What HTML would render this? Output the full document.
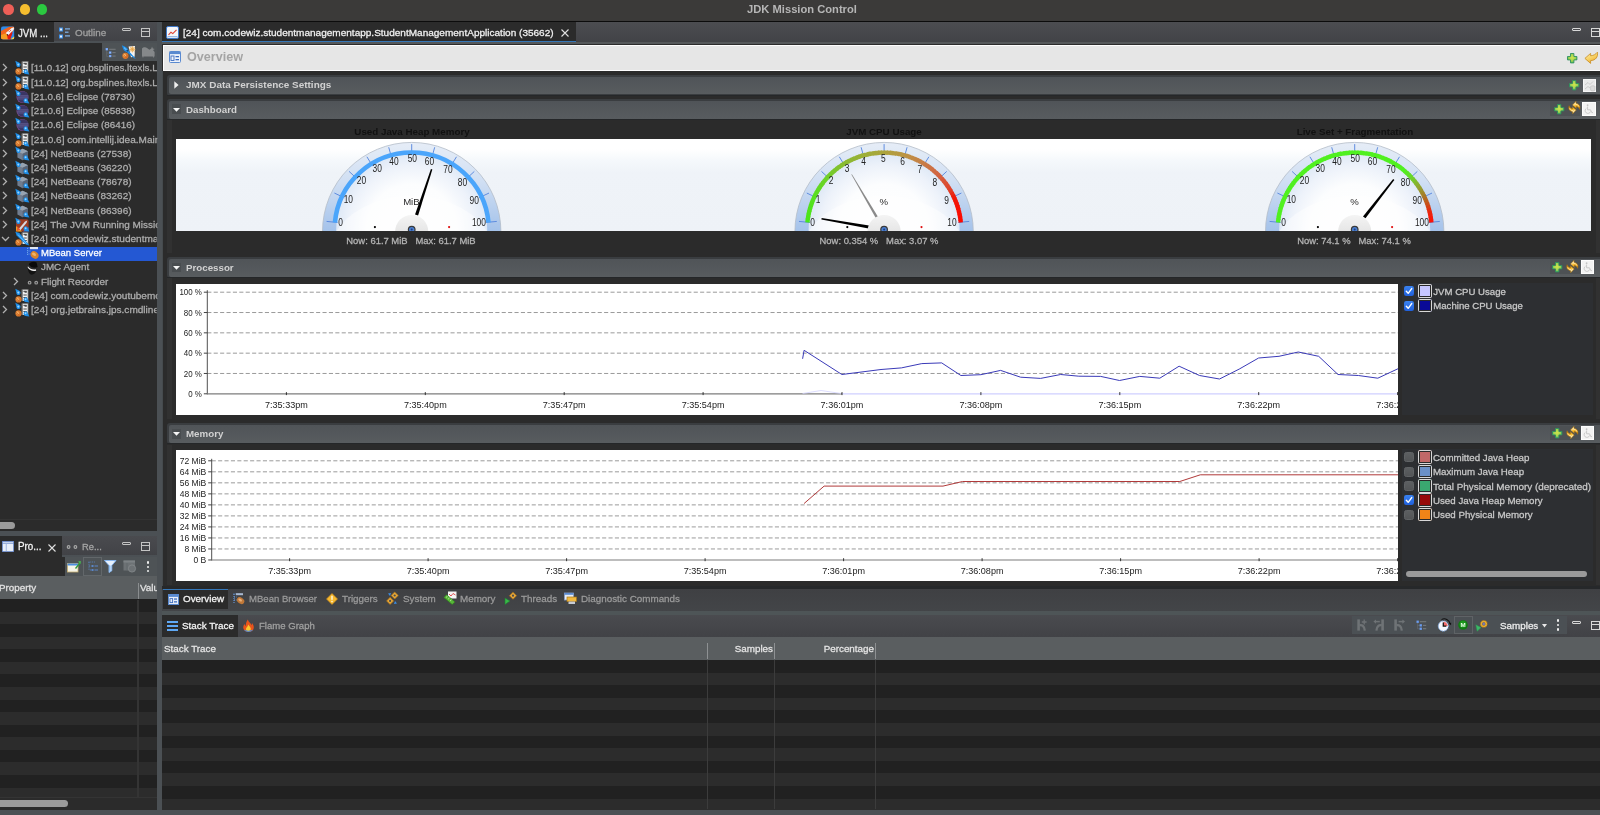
<!DOCTYPE html>
<html><head><meta charset="utf-8"><title>JDK Mission Control</title>
<style>
*{box-sizing:border-box;margin:0;padding:0}
html,body{width:1600px;height:815px;overflow:hidden;background:#2b2b2b}
body{font-family:"Liberation Sans",sans-serif;font-size:11px;color:#bbb;position:relative}
.a{position:absolute}
.t{position:absolute;white-space:nowrap;line-height:14px}
svg{position:absolute;overflow:visible}
</style></head><body>
<div class="a" style="left:0;top:0;width:1600px;height:815px;will-change:transform">

<div class="a" style="left:0px;top:0px;width:1600px;height:22px;background:#3b3a39;"></div>
<div class="a" style="left:0px;top:20.9px;width:1600px;height:1.2px;background:#0c0c0c;"></div>
<div class="a" style="left:3.000000000000001px;top:4.1000000000000005px;width:10.6px;height:10.6px;border-radius:50%;background:#ee5f57"></div>
<div class="a" style="left:19.7px;top:4.1000000000000005px;width:10.6px;height:10.6px;border-radius:50%;background:#f6be2f"></div>
<div class="a" style="left:36.7px;top:4.1000000000000005px;width:10.6px;height:10.6px;border-radius:50%;background:#2bc840"></div>
<div class="t" style="left:601.7px;top:1.8px;width:400px;text-align:center;transform-origin:50% 50%;transform:scaleX(1.015);color:#b6b6b6;font-size:11px;font-weight:bold;">JDK Mission Control</div>
<div class="a" style="left:157px;top:22px;width:5px;height:793px;background:#4b5054;"></div>
<div class="a" style="left:0px;top:22px;width:157px;height:19.6px;background:linear-gradient(#4a4b4f,#414246);"></div>
<div class="a" style="left:0px;top:41.4px;width:157px;height:1.6px;background:#4b5054;"></div>
<div class="a" style="left:0px;top:22px;width:54px;height:19.6px;background:#2b2b2b;"></div>
<svg style="left:0.9px;top:25.7px" width="13.4" height="13.8" viewBox="0 0 13 13"><defs><clipPath id="jmcc"><rect x="0" y="0" width="13" height="13" rx="2.2"/></clipPath></defs><g clip-path="url(#jmcc)"><rect width="13" height="13" fill="#2f8ae8"/><path d="M0 4.6 L7.6 0.8 L13 0 L13 2.4 L9.4 8.6 L9.2 13 L0 13 Z" fill="#f2641c"/><path d="M6.2 6 L9.4 4 L11.2 6.6 L9 13 L6.4 13 Z" fill="#e21c10"/><path d="M0 8.6 L5 6.8 L6.6 13 L0 13 Z" fill="#f89c20"/><path d="M9.2 13 L13 9.8 L13 13 Z" fill="#f8d444"/><path d="M4.6 6.6 L10.4 1.8 L12.8 1 L12.2 3.6 L7 8.8 Z" fill="#f4f4f8"/><path d="M7.4 4.4 L8.6 5.8 M8.6 3.4 L9.8 4.8" stroke="#e02010" stroke-width="0.7"/><path d="M6.3 7.5 L7.3 8.5 L6.5 9.3 L5.6 8.3 Z" fill="#1c1c1c"/></g></svg>
<div class="t" style="left:18px;top:25.5px;transform-origin:0 50%;transform:scaleX(0.91);color:#f0f0f0;font-size:10.6px;-webkit-text-stroke:0.28px;">JVM ...</div>
<svg style="left:59px;top:27px" width="12" height="12" viewBox="0 0 12 12"><rect x="0" y="0.5" width="4" height="4" fill="#3d8fe6"/><rect x="1" y="1.5" width="2" height="2" fill="#eaf2fc"/><rect x="0" y="7.5" width="4" height="4" fill="#3d8fe6"/><rect x="1" y="8.5" width="2" height="2" fill="#eaf2fc"/><rect x="6" y="1.3" width="5" height="1.2" fill="#7fb6f0"/><rect x="6" y="4.6" width="3.5" height="1.2" fill="#7fb6f0"/><rect x="6" y="8.3" width="5" height="1.2" fill="#7fb6f0"/></svg>
<div class="t" style="left:75px;top:26px;transform-origin:0 50%;transform:scaleX(0.9994);color:#a0a0a0;font-size:9.85px;-webkit-text-stroke:0.28px;">Outline</div>
<div class="a" style="left:122px;top:28px;width:9px;height:3px;border:1px solid #c4c4c4;border-radius:1px"></div>
<div class="a" style="left:141px;top:28px;width:9px;height:9px;border:1px solid #c4c4c4;border-top-width:1px"></div><div class="a" style="left:141px;top:30.5px;width:9px;height:1px;background:#c4c4c4"></div>
<div class="a" style="left:0px;top:43px;width:157px;height:18px;background:#2b2b2b;"></div>
<div class="a" style="left:101.8px;top:42.6px;width:55.2px;height:18.5px;background:#4e5356;"></div>
<svg style="left:105px;top:47px" width="12" height="11" viewBox="0 0 12 11"><path d="M1.6 3 V9.4 H4 M1.6 6 H4" stroke="#6a6e72" stroke-width="0.6" fill="none"/><rect x="0.6" y="1" width="2.4" height="2.4" fill="#6a9cf0"/><rect x="4" y="4.4" width="2.4" height="2.4" fill="#6a9cf0"/><rect x="4" y="8" width="2.4" height="2.2" fill="#6a9cf0"/><rect x="1.3" y="1.7" width="1" height="1" fill="#a8c8fa"/><rect x="4.7" y="5.1" width="1" height="1" fill="#a8c8fa"/><rect x="4.7" y="8.6" width="1" height="1" fill="#a8c8fa"/><rect x="4.2" y="1.8" width="6.4" height="0.9" fill="#7c8084"/><rect x="7.4" y="5.2" width="3.2" height="0.9" fill="#7c8084"/><rect x="7.4" y="8.6" width="3.2" height="0.9" fill="#7c8084"/></svg>
<svg style="left:121px;top:45px" width="15" height="15" viewBox="0 0 15 15"><path d="M7.6 1.4 L14 1 L13.6 11.8 L10 12.2 Z" fill="#f4f4f4"/><circle cx="11.4" cy="4.3" r="2.5" fill="#f6dcae"/><path d="M11.4 1.2 V7.4 M8.3 4.3 H14.5 M9.3 2.2 L13.5 6.4 M13.5 2.2 L9.3 6.4" stroke="#e8a040" stroke-width="0.7"/><circle cx="4.4" cy="10.8" r="3.1" fill="#d8782a"/><circle cx="3.8" cy="10.1" r="1.7" fill="#f4c070" opacity="0.9"/><path d="M2.4 9.4 L5.6 13 M4 8.4 L7 11.6" stroke="#c84818" stroke-width="0.6"/><path d="M0.8 0.2 L4.2 1.8 C6.4 3 7.2 4.6 7.4 5.8 L14.8 13.8 L13 13.2 L5.8 7 C4 6.6 2.6 5.2 2 3.4 Z" fill="#1d8ee8"/><path d="M3 2.6 L6.4 5.8" stroke="#9ad6ff" stroke-width="0.9"/><path d="M5.6 5 L7 6.4" stroke="#0a3a70" stroke-width="1.2"/></svg>
<svg style="left:141px;top:46px" width="15" height="12" viewBox="0 0 15 12"><path d="M1 2.6 C2 0.8 5 0.8 6 2 L8.4 3.8 L10.4 2.6 L11 0.4 L11.8 2.4 L13.8 3 L12 4 L13.6 6 V10.6 H12.8 V11.6 H12 V10.6 H2.4 V11.6 H1.6 V10.6 H1 Z" fill="#85888a"/></svg>
<div class="a" style="left:0px;top:61px;width:157px;height:470px;background:#2b2b2b;"></div>
<svg style="left:3.3px;top:64.4px" width="5" height="8"><path d="M0 0 L3.5 3.5 L0 7" fill="none" stroke="#b0b0b0" stroke-width="1.3"/></svg>
<svg style="left:14.5px;top:61.4px" width="15" height="14" viewBox="0 0 15 14"><rect x="6.7" y="0.6" width="6.9" height="11.3" fill="#f2f2f2"/><rect x="6.7" y="0.6" width="0.8" height="11.3" fill="#1a1a1a"/><rect x="12.8" y="0.6" width="0.8" height="11.3" fill="#1a1a1a"/><rect x="8.4" y="1.8" width="3.4" height="0.9" fill="#222"/><rect x="9.6" y="2.7" width="2.2" height="0.9" fill="#222"/><rect x="8.4" y="5.6" width="3.4" height="0.8" fill="#222"/><rect x="8.4" y="8.0" width="3.4" height="0.8" fill="#222"/><circle cx="3.5" cy="10.4" r="3.1" fill="#d8782a"/><circle cx="2.9" cy="9.7" r="1.7" fill="#f2b060" opacity="0.9"/><path d="M1.2 9.2 L4.4 12.6 M2.6 7.8 L5.8 11.2" stroke="#c8501a" stroke-width="0.6"/><path d="M0.3 -0.2 L3.4 1.2 C5.6 1.6 6.2 4 4.9 5.4 C3.4 6.9 1.2 5.8 1.3 3.4 Z" fill="#1d8ee8"/><circle cx="3.3" cy="3.6" r="1.05" fill="#9ad6ff"/><path d="M14.4 13.4 L10.6 13 C8.6 12.6 7.9 10.4 9.2 9 C10.6 7.6 12.6 8.4 12.8 10.4 Z" fill="#1d8ee8"/><circle cx="10.6" cy="10.2" r="0.95" fill="#9ad6ff"/></svg>
<div class="t" style="left:31px;top:61.4px;width:126.1px;overflow:hidden;transform-origin:0 50%;transform:scaleX(0.9994);color:#adadad;font-size:9.85px;-webkit-text-stroke:0.28px;">[11.0.12] org.bsplines.ltexls.LtexLanguageServerLauncher</div>
<svg style="left:3.3px;top:78.62px" width="5" height="8"><path d="M0 0 L3.5 3.5 L0 7" fill="none" stroke="#b0b0b0" stroke-width="1.3"/></svg>
<svg style="left:14.5px;top:75.62px" width="15" height="14" viewBox="0 0 15 14"><rect x="6.7" y="0.6" width="6.9" height="11.3" fill="#f2f2f2"/><rect x="6.7" y="0.6" width="0.8" height="11.3" fill="#1a1a1a"/><rect x="12.8" y="0.6" width="0.8" height="11.3" fill="#1a1a1a"/><rect x="8.4" y="1.8" width="3.4" height="0.9" fill="#222"/><rect x="9.6" y="2.7" width="2.2" height="0.9" fill="#222"/><rect x="8.4" y="5.6" width="3.4" height="0.8" fill="#222"/><rect x="8.4" y="8.0" width="3.4" height="0.8" fill="#222"/><circle cx="3.5" cy="10.4" r="3.1" fill="#d8782a"/><circle cx="2.9" cy="9.7" r="1.7" fill="#f2b060" opacity="0.9"/><path d="M1.2 9.2 L4.4 12.6 M2.6 7.8 L5.8 11.2" stroke="#c8501a" stroke-width="0.6"/><path d="M0.3 -0.2 L3.4 1.2 C5.6 1.6 6.2 4 4.9 5.4 C3.4 6.9 1.2 5.8 1.3 3.4 Z" fill="#1d8ee8"/><circle cx="3.3" cy="3.6" r="1.05" fill="#9ad6ff"/><path d="M14.4 13.4 L10.6 13 C8.6 12.6 7.9 10.4 9.2 9 C10.6 7.6 12.6 8.4 12.8 10.4 Z" fill="#1d8ee8"/><circle cx="10.6" cy="10.2" r="0.95" fill="#9ad6ff"/></svg>
<div class="t" style="left:31px;top:75.62px;width:126.1px;overflow:hidden;transform-origin:0 50%;transform:scaleX(0.9994);color:#adadad;font-size:9.85px;-webkit-text-stroke:0.28px;">[11.0.12] org.bsplines.ltexls.LtexLanguageServerLauncher</div>
<svg style="left:3.3px;top:92.84px" width="5" height="8"><path d="M0 0 L3.5 3.5 L0 7" fill="none" stroke="#b0b0b0" stroke-width="1.3"/></svg>
<svg style="left:14.5px;top:89.84px" width="15" height="14" viewBox="0 0 15 14"><circle cx="7.5" cy="7.0" r="6.0" fill="#8a4a98"/><circle cx="7.9" cy="7.0" r="5.8" fill="#3b3664"/><rect x="2.6" y="5.5" width="10.6" height="0.9" fill="#6e6aa2"/><rect x="2.2" y="7.5" width="11" height="0.9" fill="#6e6aa2"/><rect x="2.8" y="9.4" width="9.8" height="0.7" fill="#555188"/><path d="M0.3 -0.2 L3.4 1.2 C5.6 1.6 6.2 4 4.9 5.4 C3.4 6.9 1.2 5.8 1.3 3.4 Z" fill="#1d8ee8"/><circle cx="3.3" cy="3.6" r="1.05" fill="#9ad6ff"/><path d="M14.4 13.4 L10.6 13 C8.6 12.6 7.9 10.4 9.2 9 C10.6 7.6 12.6 8.4 12.8 10.4 Z" fill="#1d8ee8"/><circle cx="10.6" cy="10.2" r="0.95" fill="#9ad6ff"/></svg>
<div class="t" style="left:31px;top:89.84px;width:126.1px;overflow:hidden;transform-origin:0 50%;transform:scaleX(0.9994);color:#adadad;font-size:9.85px;-webkit-text-stroke:0.28px;">[21.0.6] Eclipse (78730)</div>
<svg style="left:3.3px;top:107.06px" width="5" height="8"><path d="M0 0 L3.5 3.5 L0 7" fill="none" stroke="#b0b0b0" stroke-width="1.3"/></svg>
<svg style="left:14.5px;top:104.06px" width="15" height="14" viewBox="0 0 15 14"><circle cx="7.5" cy="7.0" r="6.0" fill="#8a4a98"/><circle cx="7.9" cy="7.0" r="5.8" fill="#3b3664"/><rect x="2.6" y="5.5" width="10.6" height="0.9" fill="#6e6aa2"/><rect x="2.2" y="7.5" width="11" height="0.9" fill="#6e6aa2"/><rect x="2.8" y="9.4" width="9.8" height="0.7" fill="#555188"/><path d="M0.3 -0.2 L3.4 1.2 C5.6 1.6 6.2 4 4.9 5.4 C3.4 6.9 1.2 5.8 1.3 3.4 Z" fill="#1d8ee8"/><circle cx="3.3" cy="3.6" r="1.05" fill="#9ad6ff"/><path d="M14.4 13.4 L10.6 13 C8.6 12.6 7.9 10.4 9.2 9 C10.6 7.6 12.6 8.4 12.8 10.4 Z" fill="#1d8ee8"/><circle cx="10.6" cy="10.2" r="0.95" fill="#9ad6ff"/></svg>
<div class="t" style="left:31px;top:104.06px;width:126.1px;overflow:hidden;transform-origin:0 50%;transform:scaleX(0.9994);color:#adadad;font-size:9.85px;-webkit-text-stroke:0.28px;">[21.0.6] Eclipse (85838)</div>
<svg style="left:3.3px;top:121.28px" width="5" height="8"><path d="M0 0 L3.5 3.5 L0 7" fill="none" stroke="#b0b0b0" stroke-width="1.3"/></svg>
<svg style="left:14.5px;top:118.28px" width="15" height="14" viewBox="0 0 15 14"><circle cx="7.5" cy="7.0" r="6.0" fill="#8a4a98"/><circle cx="7.9" cy="7.0" r="5.8" fill="#3b3664"/><rect x="2.6" y="5.5" width="10.6" height="0.9" fill="#6e6aa2"/><rect x="2.2" y="7.5" width="11" height="0.9" fill="#6e6aa2"/><rect x="2.8" y="9.4" width="9.8" height="0.7" fill="#555188"/><path d="M0.3 -0.2 L3.4 1.2 C5.6 1.6 6.2 4 4.9 5.4 C3.4 6.9 1.2 5.8 1.3 3.4 Z" fill="#1d8ee8"/><circle cx="3.3" cy="3.6" r="1.05" fill="#9ad6ff"/><path d="M14.4 13.4 L10.6 13 C8.6 12.6 7.9 10.4 9.2 9 C10.6 7.6 12.6 8.4 12.8 10.4 Z" fill="#1d8ee8"/><circle cx="10.6" cy="10.2" r="0.95" fill="#9ad6ff"/></svg>
<div class="t" style="left:31px;top:118.28px;width:126.1px;overflow:hidden;transform-origin:0 50%;transform:scaleX(0.9994);color:#adadad;font-size:9.85px;-webkit-text-stroke:0.28px;">[21.0.6] Eclipse (86416)</div>
<svg style="left:3.3px;top:135.50000000000003px" width="5" height="8"><path d="M0 0 L3.5 3.5 L0 7" fill="none" stroke="#b0b0b0" stroke-width="1.3"/></svg>
<svg style="left:14.5px;top:132.50000000000003px" width="15" height="14" viewBox="0 0 15 14"><rect x="6.7" y="0.6" width="6.9" height="11.3" fill="#f2f2f2"/><rect x="6.7" y="0.6" width="0.8" height="11.3" fill="#1a1a1a"/><rect x="12.8" y="0.6" width="0.8" height="11.3" fill="#1a1a1a"/><rect x="8.4" y="1.8" width="3.4" height="0.9" fill="#222"/><rect x="9.6" y="2.7" width="2.2" height="0.9" fill="#222"/><rect x="8.4" y="5.6" width="3.4" height="0.8" fill="#222"/><rect x="8.4" y="8.0" width="3.4" height="0.8" fill="#222"/><circle cx="3.5" cy="10.4" r="3.1" fill="#d8782a"/><circle cx="2.9" cy="9.7" r="1.7" fill="#f2b060" opacity="0.9"/><path d="M1.2 9.2 L4.4 12.6 M2.6 7.8 L5.8 11.2" stroke="#c8501a" stroke-width="0.6"/><path d="M0.3 -0.2 L3.4 1.2 C5.6 1.6 6.2 4 4.9 5.4 C3.4 6.9 1.2 5.8 1.3 3.4 Z" fill="#1d8ee8"/><circle cx="3.3" cy="3.6" r="1.05" fill="#9ad6ff"/><path d="M14.4 13.4 L10.6 13 C8.6 12.6 7.9 10.4 9.2 9 C10.6 7.6 12.6 8.4 12.8 10.4 Z" fill="#1d8ee8"/><circle cx="10.6" cy="10.2" r="0.95" fill="#9ad6ff"/></svg>
<div class="t" style="left:31px;top:132.5px;width:123.7px;overflow:hidden;transform-origin:0 50%;transform:scaleX(1.0184);color:#adadad;font-size:9.85px;-webkit-text-stroke:0.28px;">[21.0.6] com.intellij.idea.Main (1234)</div>
<svg style="left:3.3px;top:149.72000000000003px" width="5" height="8"><path d="M0 0 L3.5 3.5 L0 7" fill="none" stroke="#b0b0b0" stroke-width="1.3"/></svg>
<svg style="left:14.5px;top:146.72000000000003px" width="15" height="14" viewBox="0 0 15 14"><path d="M7.6 1.8 L13 4.2 L13 10.4 L7.6 13.2 L2.4 10.4 L2.4 4.2 Z" fill="#717d8f"/><path d="M7.6 1.8 L13 4.2 L7.6 6.8 L2.4 4.2 Z" fill="#97a3b1"/><path d="M7.6 6.8 L13 4.2 L13 10.4 L7.6 13.2 Z" fill="#586476"/><path d="M0.3 -0.2 L3.4 1.2 C5.6 1.6 6.2 4 4.9 5.4 C3.4 6.9 1.2 5.8 1.3 3.4 Z" fill="#1d8ee8"/><circle cx="3.3" cy="3.6" r="1.05" fill="#9ad6ff"/><path d="M14.4 13.4 L10.6 13 C8.6 12.6 7.9 10.4 9.2 9 C10.6 7.6 12.6 8.4 12.8 10.4 Z" fill="#1d8ee8"/><circle cx="10.6" cy="10.2" r="0.95" fill="#9ad6ff"/></svg>
<div class="t" style="left:31px;top:146.72px;width:124.1px;overflow:hidden;transform-origin:0 50%;transform:scaleX(1.0151);color:#adadad;font-size:9.85px;-webkit-text-stroke:0.28px;">[24] NetBeans (27538)</div>
<svg style="left:3.3px;top:163.94000000000003px" width="5" height="8"><path d="M0 0 L3.5 3.5 L0 7" fill="none" stroke="#b0b0b0" stroke-width="1.3"/></svg>
<svg style="left:14.5px;top:160.94000000000003px" width="15" height="14" viewBox="0 0 15 14"><path d="M7.6 1.8 L13 4.2 L13 10.4 L7.6 13.2 L2.4 10.4 L2.4 4.2 Z" fill="#717d8f"/><path d="M7.6 1.8 L13 4.2 L7.6 6.8 L2.4 4.2 Z" fill="#97a3b1"/><path d="M7.6 6.8 L13 4.2 L13 10.4 L7.6 13.2 Z" fill="#586476"/><path d="M0.3 -0.2 L3.4 1.2 C5.6 1.6 6.2 4 4.9 5.4 C3.4 6.9 1.2 5.8 1.3 3.4 Z" fill="#1d8ee8"/><circle cx="3.3" cy="3.6" r="1.05" fill="#9ad6ff"/><path d="M14.4 13.4 L10.6 13 C8.6 12.6 7.9 10.4 9.2 9 C10.6 7.6 12.6 8.4 12.8 10.4 Z" fill="#1d8ee8"/><circle cx="10.6" cy="10.2" r="0.95" fill="#9ad6ff"/></svg>
<div class="t" style="left:31px;top:160.94px;width:124.1px;overflow:hidden;transform-origin:0 50%;transform:scaleX(1.0151);color:#adadad;font-size:9.85px;-webkit-text-stroke:0.28px;">[24] NetBeans (36220)</div>
<svg style="left:3.3px;top:178.16000000000003px" width="5" height="8"><path d="M0 0 L3.5 3.5 L0 7" fill="none" stroke="#b0b0b0" stroke-width="1.3"/></svg>
<svg style="left:14.5px;top:175.16000000000003px" width="15" height="14" viewBox="0 0 15 14"><path d="M7.6 1.8 L13 4.2 L13 10.4 L7.6 13.2 L2.4 10.4 L2.4 4.2 Z" fill="#717d8f"/><path d="M7.6 1.8 L13 4.2 L7.6 6.8 L2.4 4.2 Z" fill="#97a3b1"/><path d="M7.6 6.8 L13 4.2 L13 10.4 L7.6 13.2 Z" fill="#586476"/><path d="M0.3 -0.2 L3.4 1.2 C5.6 1.6 6.2 4 4.9 5.4 C3.4 6.9 1.2 5.8 1.3 3.4 Z" fill="#1d8ee8"/><circle cx="3.3" cy="3.6" r="1.05" fill="#9ad6ff"/><path d="M14.4 13.4 L10.6 13 C8.6 12.6 7.9 10.4 9.2 9 C10.6 7.6 12.6 8.4 12.8 10.4 Z" fill="#1d8ee8"/><circle cx="10.6" cy="10.2" r="0.95" fill="#9ad6ff"/></svg>
<div class="t" style="left:31px;top:175.16px;width:124.1px;overflow:hidden;transform-origin:0 50%;transform:scaleX(1.0151);color:#adadad;font-size:9.85px;-webkit-text-stroke:0.28px;">[24] NetBeans (78678)</div>
<svg style="left:3.3px;top:192.38000000000002px" width="5" height="8"><path d="M0 0 L3.5 3.5 L0 7" fill="none" stroke="#b0b0b0" stroke-width="1.3"/></svg>
<svg style="left:14.5px;top:189.38000000000002px" width="15" height="14" viewBox="0 0 15 14"><path d="M7.6 1.8 L13 4.2 L13 10.4 L7.6 13.2 L2.4 10.4 L2.4 4.2 Z" fill="#717d8f"/><path d="M7.6 1.8 L13 4.2 L7.6 6.8 L2.4 4.2 Z" fill="#97a3b1"/><path d="M7.6 6.8 L13 4.2 L13 10.4 L7.6 13.2 Z" fill="#586476"/><path d="M0.3 -0.2 L3.4 1.2 C5.6 1.6 6.2 4 4.9 5.4 C3.4 6.9 1.2 5.8 1.3 3.4 Z" fill="#1d8ee8"/><circle cx="3.3" cy="3.6" r="1.05" fill="#9ad6ff"/><path d="M14.4 13.4 L10.6 13 C8.6 12.6 7.9 10.4 9.2 9 C10.6 7.6 12.6 8.4 12.8 10.4 Z" fill="#1d8ee8"/><circle cx="10.6" cy="10.2" r="0.95" fill="#9ad6ff"/></svg>
<div class="t" style="left:31px;top:189.38px;width:124.1px;overflow:hidden;transform-origin:0 50%;transform:scaleX(1.0151);color:#adadad;font-size:9.85px;-webkit-text-stroke:0.28px;">[24] NetBeans (83262)</div>
<svg style="left:3.3px;top:206.60000000000002px" width="5" height="8"><path d="M0 0 L3.5 3.5 L0 7" fill="none" stroke="#b0b0b0" stroke-width="1.3"/></svg>
<svg style="left:14.5px;top:203.60000000000002px" width="15" height="14" viewBox="0 0 15 14"><path d="M7.6 1.8 L13 4.2 L13 10.4 L7.6 13.2 L2.4 10.4 L2.4 4.2 Z" fill="#717d8f"/><path d="M7.6 1.8 L13 4.2 L7.6 6.8 L2.4 4.2 Z" fill="#97a3b1"/><path d="M7.6 6.8 L13 4.2 L13 10.4 L7.6 13.2 Z" fill="#586476"/><path d="M0.3 -0.2 L3.4 1.2 C5.6 1.6 6.2 4 4.9 5.4 C3.4 6.9 1.2 5.8 1.3 3.4 Z" fill="#1d8ee8"/><circle cx="3.3" cy="3.6" r="1.05" fill="#9ad6ff"/><path d="M14.4 13.4 L10.6 13 C8.6 12.6 7.9 10.4 9.2 9 C10.6 7.6 12.6 8.4 12.8 10.4 Z" fill="#1d8ee8"/><circle cx="10.6" cy="10.2" r="0.95" fill="#9ad6ff"/></svg>
<div class="t" style="left:31px;top:203.6px;width:124.1px;overflow:hidden;transform-origin:0 50%;transform:scaleX(1.0151);color:#adadad;font-size:9.85px;-webkit-text-stroke:0.28px;">[24] NetBeans (86396)</div>
<svg style="left:3.3px;top:220.82000000000002px" width="5" height="8"><path d="M0 0 L3.5 3.5 L0 7" fill="none" stroke="#b0b0b0" stroke-width="1.3"/></svg>
<svg style="left:14.5px;top:217.82000000000002px" width="15" height="14" viewBox="0 0 15 14"><rect x="1" y="1.2" width="12.6" height="12.4" rx="2" fill="#9c3c24"/><path d="M1 13.6 L1 8 L7 13.6 Z" fill="#f0a020"/><path d="M13.6 13.6 H8 L13.6 9 Z" fill="#2d6fd0"/><path d="M3.4 11.2 L10 3.4 L12.2 2.4 L11.6 4.8 L5.4 12.2 Z" fill="#d8d8e0"/><path d="M2.4 8.4 L5.4 11.4 L1.6 13.2 Z" fill="#e8552b"/><path d="M0.3 -0.2 L3.4 1.2 C5.6 1.6 6.2 4 4.9 5.4 C3.4 6.9 1.2 5.8 1.3 3.4 Z" fill="#1d8ee8"/><circle cx="3.3" cy="3.6" r="1.05" fill="#9ad6ff"/><path d="M14.4 13.4 L10.6 13 C8.6 12.6 7.9 10.4 9.2 9 C10.6 7.6 12.6 8.4 12.8 10.4 Z" fill="#1d8ee8"/><circle cx="10.6" cy="10.2" r="0.95" fill="#9ad6ff"/></svg>
<div class="t" style="left:31px;top:217.82px;width:124.7px;overflow:hidden;transform-origin:0 50%;transform:scaleX(1.0106);color:#adadad;font-size:9.85px;-webkit-text-stroke:0.28px;">[24] The JVM Running Mission Control</div>
<svg style="left:2.3px;top:236.54000000000002px" width="8" height="5"><path d="M0 0 L3.5 3.5 L7 0" fill="none" stroke="#b0b0b0" stroke-width="1.3"/></svg>
<svg style="left:14.5px;top:232.04000000000002px" width="15" height="14" viewBox="0 0 15 14"><rect x="6.7" y="0.6" width="6.9" height="11.3" fill="#f2f2f2"/><rect x="6.7" y="0.6" width="0.8" height="11.3" fill="#1a1a1a"/><rect x="12.8" y="0.6" width="0.8" height="11.3" fill="#1a1a1a"/><rect x="8.4" y="1.8" width="3.4" height="0.9" fill="#222"/><rect x="9.6" y="2.7" width="2.2" height="0.9" fill="#222"/><rect x="8.4" y="5.6" width="3.4" height="0.8" fill="#222"/><rect x="8.4" y="8.0" width="3.4" height="0.8" fill="#222"/><circle cx="3.5" cy="10.4" r="3.1" fill="#d8782a"/><circle cx="2.9" cy="9.7" r="1.7" fill="#f2b060" opacity="0.9"/><path d="M1.2 9.2 L4.4 12.6 M2.6 7.8 L5.8 11.2" stroke="#c8501a" stroke-width="0.6"/><path d="M0.3 -0.2 L4.4 1 L13.2 11.8 L14.4 13.6 L10.8 12.6 L1.6 3.4 Z" fill="#1d8ee8"/><path d="M3 2.6 L11.6 11.6" stroke="#9ad6ff" stroke-width="0.7"/></svg>
<div class="t" style="left:31px;top:232.04px;width:123.3px;overflow:hidden;transform-origin:0 50%;transform:scaleX(1.0218);color:#adadad;font-size:9.85px;-webkit-text-stroke:0.28px;">[24] com.codewiz.studentmanagementapp.StudentManagementApplication</div>
<div class="a" style="left:0px;top:247px;width:157px;height:14px;background:#2458d3;"></div>
<svg style="left:27px;top:247.16px" width="12" height="13" viewBox="0 0 12 13"><path d="M0.5 1 H7 M0.5 1 V9 M0.5 4 H4 M0.5 7 H4" stroke="#6aa0e8" stroke-width="1" fill="none" stroke-dasharray="1 1"/><rect x="3" y="0" width="8" height="2.2" fill="#dfe6f2"/><ellipse cx="7.6" cy="8" rx="4.2" ry="3.4" transform="rotate(35 7.6 8)" fill="#d9832b"/><ellipse cx="7" cy="7.2" rx="2.2" ry="1.4" transform="rotate(35 7 7.2)" fill="#f0b36a"/></svg>
<div class="t" style="left:41px;top:246.26px;width:119.9px;overflow:hidden;transform-origin:0 50%;transform:scaleX(0.9671);color:#ffffff;font-size:9.85px;-webkit-text-stroke:0.28px;">MBean Server</div>
<svg style="left:27px;top:261.38px" width="12" height="14" viewBox="0 0 12 14"><path d="M1.8 3.4 C2.6 0.8 7.6 -0.2 9.6 1.6 L10.6 6 C7.4 7.6 3.4 6.2 1.8 3.4 Z" fill="#0a0a0a"/><path d="M0.6 6.6 C2.4 10 6.4 11.2 9.2 10 C8 13 5 14.6 3 13 C1.6 11.6 0.8 9 0.6 6.6 Z" fill="#121212"/><path d="M0.9 5.2 C2.8 8 6.2 9 9 8.2 L9.1 9.7 C6 10.8 2.4 9.4 0.7 6.6 Z" fill="#f0f0f0"/></svg>
<div class="t" style="left:41px;top:260.48px;width:116.1px;overflow:hidden;transform-origin:0 50%;transform:scaleX(0.9994);color:#adadad;font-size:9.85px;-webkit-text-stroke:0.28px;">JMC Agent</div>
<svg style="left:14.2px;top:277.70000000000005px" width="5" height="8"><path d="M0 0 L3.5 3.5 L0 7" fill="none" stroke="#b0b0b0" stroke-width="1.3"/></svg>
<svg style="left:27px;top:275.6px" width="12" height="13" viewBox="0 0 12 13"><circle cx="2.6" cy="6.7" r="1.9" fill="#9a9a9a"/><circle cx="9.2" cy="6.7" r="1.9" fill="#9a9a9a"/><circle cx="2.6" cy="6.7" r="0.7" fill="#2b2b2b"/><circle cx="9.2" cy="6.7" r="0.7" fill="#2b2b2b"/></svg>
<div class="t" style="left:41px;top:274.7px;width:116.1px;overflow:hidden;transform-origin:0 50%;transform:scaleX(0.9994);color:#adadad;font-size:9.85px;-webkit-text-stroke:0.28px;">Flight Recorder</div>
<svg style="left:3.3px;top:291.92px" width="5" height="8"><path d="M0 0 L3.5 3.5 L0 7" fill="none" stroke="#b0b0b0" stroke-width="1.3"/></svg>
<svg style="left:14.5px;top:288.92px" width="15" height="14" viewBox="0 0 15 14"><rect x="6.7" y="0.6" width="6.9" height="11.3" fill="#f2f2f2"/><rect x="6.7" y="0.6" width="0.8" height="11.3" fill="#1a1a1a"/><rect x="12.8" y="0.6" width="0.8" height="11.3" fill="#1a1a1a"/><rect x="8.4" y="1.8" width="3.4" height="0.9" fill="#222"/><rect x="9.6" y="2.7" width="2.2" height="0.9" fill="#222"/><rect x="8.4" y="5.6" width="3.4" height="0.8" fill="#222"/><rect x="8.4" y="8.0" width="3.4" height="0.8" fill="#222"/><circle cx="3.5" cy="10.4" r="3.1" fill="#d8782a"/><circle cx="2.9" cy="9.7" r="1.7" fill="#f2b060" opacity="0.9"/><path d="M1.2 9.2 L4.4 12.6 M2.6 7.8 L5.8 11.2" stroke="#c8501a" stroke-width="0.6"/><path d="M0.3 -0.2 L3.4 1.2 C5.6 1.6 6.2 4 4.9 5.4 C3.4 6.9 1.2 5.8 1.3 3.4 Z" fill="#1d8ee8"/><circle cx="3.3" cy="3.6" r="1.05" fill="#9ad6ff"/><path d="M14.4 13.4 L10.6 13 C8.6 12.6 7.9 10.4 9.2 9 C10.6 7.6 12.6 8.4 12.8 10.4 Z" fill="#1d8ee8"/><circle cx="10.6" cy="10.2" r="0.95" fill="#9ad6ff"/></svg>
<div class="t" style="left:31px;top:288.92px;width:123.7px;overflow:hidden;transform-origin:0 50%;transform:scaleX(1.0184);color:#adadad;font-size:9.85px;-webkit-text-stroke:0.28px;">[24] com.codewiz.youtubemcp.YoutubeMcpApplication</div>
<svg style="left:3.3px;top:306.14000000000004px" width="5" height="8"><path d="M0 0 L3.5 3.5 L0 7" fill="none" stroke="#b0b0b0" stroke-width="1.3"/></svg>
<svg style="left:14.5px;top:303.14000000000004px" width="15" height="14" viewBox="0 0 15 14"><rect x="6.7" y="0.6" width="6.9" height="11.3" fill="#f2f2f2"/><rect x="6.7" y="0.6" width="0.8" height="11.3" fill="#1a1a1a"/><rect x="12.8" y="0.6" width="0.8" height="11.3" fill="#1a1a1a"/><rect x="8.4" y="1.8" width="3.4" height="0.9" fill="#222"/><rect x="9.6" y="2.7" width="2.2" height="0.9" fill="#222"/><rect x="8.4" y="5.6" width="3.4" height="0.8" fill="#222"/><rect x="8.4" y="8.0" width="3.4" height="0.8" fill="#222"/><circle cx="3.5" cy="10.4" r="3.1" fill="#d8782a"/><circle cx="2.9" cy="9.7" r="1.7" fill="#f2b060" opacity="0.9"/><path d="M1.2 9.2 L4.4 12.6 M2.6 7.8 L5.8 11.2" stroke="#c8501a" stroke-width="0.6"/><path d="M0.3 -0.2 L3.4 1.2 C5.6 1.6 6.2 4 4.9 5.4 C3.4 6.9 1.2 5.8 1.3 3.4 Z" fill="#1d8ee8"/><circle cx="3.3" cy="3.6" r="1.05" fill="#9ad6ff"/><path d="M14.4 13.4 L10.6 13 C8.6 12.6 7.9 10.4 9.2 9 C10.6 7.6 12.6 8.4 12.8 10.4 Z" fill="#1d8ee8"/><circle cx="10.6" cy="10.2" r="0.95" fill="#9ad6ff"/></svg>
<div class="t" style="left:31px;top:303.14px;width:123.3px;overflow:hidden;transform-origin:0 50%;transform:scaleX(1.0218);color:#adadad;font-size:9.85px;-webkit-text-stroke:0.28px;">[24] org.jetbrains.jps.cmdline.Launcher</div>
<div class="a" style="left:0px;top:519px;width:157px;height:12px;background:#2b2b2b;border-top:1px solid #333"></div>
<div class="a" style="left:0px;top:522px;width:15px;height:7px;background:#9b9b9b;border-radius:0 3.5px 3.5px 0"></div>
<div class="a" style="left:0px;top:531px;width:157px;height:5px;background:#4b5054;"></div>
<div class="a" style="left:0px;top:536px;width:157px;height:19.6px;background:linear-gradient(#4a4b4f,#414246);"></div>
<div class="a" style="left:0px;top:555.4px;width:157px;height:1.6px;background:#4b5054;"></div>
<div class="a" style="left:0px;top:536px;width:62px;height:20.6px;background:#2b2b2b;"></div>
<svg style="left:2px;top:541px" width="12" height="11" viewBox="0 0 12 11"><rect x="0" y="0" width="12" height="11" fill="#5f7fc0"/><rect x="0.8" y="2.8" width="10.4" height="7.4" fill="#e8eef8"/><rect x="3.8" y="2.8" width="0.8" height="7.4" fill="#8fa8d8"/><rect x="0.8" y="0.8" width="10.4" height="1.6" fill="#c6d4ee"/></svg>
<div class="t" style="left:17.5px;top:539.8px;transform-origin:0 50%;transform:scaleX(0.947);color:#f4f4f4;font-size:10.4px;-webkit-text-stroke:0.28px;">Pro...</div>
<svg style="left:47.5px;top:543.5px" width="8" height="8" viewBox="0 0 8 8"><path d="M0.5 0.5 L7.5 7.5 M7.5 0.5 L0.5 7.5" stroke="#e0e0e0" stroke-width="1.1"/></svg>
<svg style="left:66px;top:543px" width="13" height="8" viewBox="0 0 13 8"><circle cx="2.6" cy="4" r="1.9" fill="#a8a8a8"/><circle cx="9.4" cy="4" r="1.9" fill="#a8a8a8"/><circle cx="2.6" cy="4" r="0.7" fill="#3d4043"/><circle cx="9.4" cy="4" r="0.7" fill="#3d4043"/></svg>
<div class="t" style="left:82.3px;top:540px;transform-origin:0 50%;transform:scaleX(0.9492);color:#a6a6a6;font-size:9.85px;-webkit-text-stroke:0.28px;">Re...</div>
<div class="a" style="left:122px;top:542px;width:9px;height:3px;border:1px solid #c4c4c4;border-radius:1px"></div>
<div class="a" style="left:141px;top:542px;width:9px;height:9px;border:1px solid #c4c4c4;border-top-width:1px"></div><div class="a" style="left:141px;top:544.5px;width:9px;height:1px;background:#c4c4c4"></div>
<div class="a" style="left:0px;top:557px;width:157px;height:19px;background:#4e5356;"></div>
<div class="a" style="left:0px;top:557px;width:65px;height:19px;background:#2b2b2b;"></div>
<svg style="left:67px;top:560px" width="14" height="13" viewBox="0 0 14 13"><rect x="0.5" y="3.5" width="10.5" height="8.5" fill="#f4f4e8" stroke="#c8b070" stroke-width="0.8"/><rect x="0.5" y="3.5" width="10.5" height="2" fill="#4d8fe0"/><path d="M8 8 L12.5 2.5 L13.5 3.5 L9 9 Z" fill="#2e9a3a"/><path d="M11 1.5 L13.8 1 L13.5 4 Z" fill="#46c050"/></svg>
<div class="a" style="left:83px;top:557px;width:19px;height:19px;background:transparent;border:1px solid #62676a"></div>
<svg style="left:88px;top:561px" width="11" height="11" viewBox="0 0 11 11"><path d="M0.5 1 H7.5 M1 1 V9 H3 M1 5 H3" stroke="#5a86c8" stroke-width="0.8" fill="none" stroke-dasharray="1 0.8"/><rect x="3.5" y="4" width="2" height="2" fill="#5a86c8"/><rect x="3.5" y="8" width="2" height="2" fill="#5a86c8"/><rect x="6.5" y="4.5" width="3.5" height="1" fill="#5a86c8"/><rect x="6.5" y="8.5" width="3.5" height="1" fill="#5a86c8"/></svg>
<svg style="left:104px;top:560px" width="13" height="13" viewBox="0 0 13 13"><path d="M0.5 0.5 H12 L7.8 5.5 V10.8 L5 12.5 V5.5 Z" fill="#e6f0fc" stroke="#86b8f4" stroke-width="0.9"/><path d="M5.4 5.5 V11.5 L6.4 11 V5.5 Z" fill="#6aa8f0"/></svg>
<svg style="left:123px;top:560px" width="14" height="13" viewBox="0 0 14 13"><rect x="0.5" y="0.5" width="11.5" height="10" fill="#6d7275"/><rect x="0.5" y="0.5" width="11.5" height="2" fill="#7d8285"/><circle cx="9" cy="8.5" r="3.6" fill="#6d7275" stroke="#858a8d" stroke-width="0.8"/><path d="M4 3 V10" stroke="#5d6265" stroke-width="0.6"/></svg>
<div class="a" style="left:146.7px;top:561.2px;width:2.6px;height:2.6px;border-radius:50%;background:#f0f0f0"></div>
<div class="a" style="left:146.7px;top:565.5px;width:2.6px;height:2.6px;border-radius:50%;background:#f0f0f0"></div>
<div class="a" style="left:146.7px;top:569.8000000000001px;width:2.6px;height:2.6px;border-radius:50%;background:#f0f0f0"></div>
<div class="a" style="left:0px;top:576px;width:157px;height:23px;background:#5a5e60;"></div>
<div class="t" style="left:-1px;top:581px;transform-origin:0 50%;transform:scaleX(0.9994);color:#e2e2e2;font-size:9.85px;-webkit-text-stroke:0.28px;">Property</div>
<div class="a" style="left:137.5px;top:583px;width:1px;height:16px;background:#8a8d8f;"></div>
<div class="t" style="left:140px;top:581px;width:17.0px;overflow:hidden;transform-origin:0 50%;transform:scaleX(0.9994);color:#e2e2e2;font-size:9.85px;-webkit-text-stroke:0.28px;">Value</div>
<div class="a" style="left:0px;top:599.3px;width:157px;height:197.7px;background:repeating-linear-gradient(#212121 0,#212121 12.57px,#2c2c2c 12.57px,#2c2c2c 25.14px);"></div>
<div class="a" style="left:137.2px;top:599.6px;width:1.6px;height:197.4px;background:#343434;"></div>
<div class="a" style="left:0px;top:797px;width:157px;height:12px;background:#2b2b2b;border-top:1px solid #343434"></div>
<div class="a" style="left:0px;top:800px;width:68px;height:7px;background:#9b9b9b;border-radius:0 3.5px 3.5px 0"></div>
<div class="a" style="left:0px;top:809.5px;width:1600px;height:6px;background:#4b5054;"></div>
<div class="a" style="left:162px;top:22px;width:1438px;height:20.4px;background:linear-gradient(#4c4d51,#424347);"></div>
<div class="a" style="left:162px;top:22px;width:413.5px;height:20.4px;background:#2b2b2b;"></div>
<div class="a" style="left:162px;top:41.2px;width:413.5px;height:2.4px;background:#3577b8;"></div>
<div class="a" style="left:162px;top:42.2px;width:1438px;height:2px;background:#55585a;"></div>
<svg style="left:166px;top:26px" width="13" height="13" viewBox="0 0 13 13"><rect x="0.5" y="0.5" width="12" height="12" rx="1.5" fill="#f4f6fa" stroke="#3f78c8" stroke-width="1"/><path d="M2.5 8.8 L5 6.2 L6.8 7.6 L10.5 3.8" stroke="#e04030" stroke-width="1.1" fill="none"/><rect x="1.5" y="10" width="10" height="1.3" fill="#9ab8e0"/></svg>
<div class="t" style="left:182.5px;top:25.6px;transform-origin:0 50%;transform:scaleX(1.0184);color:#f0f0f0;font-size:9.85px;-webkit-text-stroke:0.28px;">[24] com.codewiz.studentmanagementapp.StudentManagementApplication (35662)</div>
<svg style="left:561px;top:29px" width="8" height="8" viewBox="0 0 8 8"><path d="M0.5 0.5 L7.5 7.5 M7.5 0.5 L0.5 7.5" stroke="#e0e0e0" stroke-width="1.1"/></svg>
<div class="a" style="left:1572px;top:28px;width:9px;height:3px;border:1px solid #d8d8d8;border-radius:1px"></div>
<div class="a" style="left:1591px;top:28px;width:9px;height:9px;border:1px solid #d8d8d8;border-top-width:1px"></div><div class="a" style="left:1591px;top:30.5px;width:9px;height:1px;background:#d8d8d8"></div>
<div class="a" style="left:162.5px;top:44.7px;width:1438px;height:26.1px;background:#e6e6e6;border:1.5px solid #fdfdfd;border-right:none"></div>
<svg style="left:169px;top:51px" width="12" height="12" viewBox="0 0 12 12"><rect x="0.5" y="0.5" width="11" height="11" rx="1" fill="#eef3fb" stroke="#5a8ad0" stroke-width="1"/><rect x="0.5" y="0.5" width="11" height="2.6" fill="#5a8ad0"/><rect x="2" y="5" width="3" height="4.5" fill="none" stroke="#3f6fc0" stroke-width="0.9"/><rect x="6.5" y="5" width="3.5" height="1.3" fill="#3f6fc0"/><rect x="6.5" y="8" width="3.5" height="1.3" fill="#3f6fc0"/></svg>
<div class="t" style="left:186.6px;top:49px;transform-origin:0 50%;transform:scaleX(0.97);color:#a4a4a4;font-size:13px;font-weight:bold;line-height:15px;">Overview</div>
<svg style="left:1567.2px;top:52.8px" width="10.4" height="10.4" viewBox="0 0 10.4 10.4"><defs><radialGradient id="plg" cx="50%" cy="45%" r="55%"><stop offset="0" stop-color="#d2e44c"/><stop offset="0.6" stop-color="#a4d450"/><stop offset="1" stop-color="#54b860"/></radialGradient></defs><path d="M3.5 0.5 H6.9 V3.5 H9.9 V6.9 H6.9 V9.9 H3.5 V6.9 H0.5 V3.5 H3.5 Z" fill="url(#plg)" stroke="#2f9060" stroke-width="0.9" stroke-linejoin="round"/></svg>
<svg style="left:1584px;top:52px" width="14" height="13" viewBox="0 0 14 13"><defs><linearGradient id="yag" x1="0" y1="0" x2="0.6" y2="1"><stop offset="0" stop-color="#fff2b8"/><stop offset="0.55" stop-color="#f8d468"/><stop offset="1" stop-color="#eeaa30"/></linearGradient></defs><path d="M0.9 6.4 L6.6 1.4 L6.6 3.8 C9.5 3.6 11.6 2.4 13.4 0.2 C14.2 4.6 12 8.4 6.6 8.6 L6.6 11.4 Z" fill="url(#yag)" stroke="#c88c20" stroke-width="0.8" stroke-linejoin="round"/></svg>
<div class="a" style="left:162.3px;top:71px;width:1.1px;height:518px;background:#454a4d;"></div>
<div class="a" style="left:167px;top:74.9px;width:1433px;height:21.0px;background:#3a3d40;border-radius:3px 0 0 3px"></div>
<div class="a" style="left:167px;top:94.5px;width:1433px;height:1.4px;background:#252729;"></div>
<div class="a" style="left:168.7px;top:76.7px;width:1431.3px;height:17.8px;background:linear-gradient(#505458,#585c5f);border-radius:2px 0 0 2px"></div>
<svg style="left:174px;top:81.3px" width="5" height="8" viewBox="0 0 5 8"><path d="M0.3 0.3 L4.6 4 L0.3 7.7 Z" fill="#f0f0f0"/></svg>
<div class="t" style="left:186.1px;top:78.3px;transform-origin:0 50%;transform:scaleX(1.082);color:#d2d2d2;font-size:9.2px;font-weight:bold;">JMX Data Persistence Settings</div>
<svg style="left:1568.6px;top:79.6px" width="10.4" height="10.4" viewBox="0 0 10.4 10.4"><defs><radialGradient id="plg" cx="50%" cy="45%" r="55%"><stop offset="0" stop-color="#d2e44c"/><stop offset="0.6" stop-color="#a4d450"/><stop offset="1" stop-color="#54b860"/></radialGradient></defs><path d="M3.5 0.5 H6.9 V3.5 H9.9 V6.9 H6.9 V9.9 H3.5 V6.9 H0.5 V3.5 H3.5 Z" fill="url(#plg)" stroke="#2f9060" stroke-width="0.9" stroke-linejoin="round"/></svg>
<div class="a" style="left:1583px;top:79px;width:12.5px;height:12.5px;background:#e9e9e9;border:1px solid #f6f6f6"></div>
<svg style="left:1584px;top:80px" width="12" height="12" viewBox="0 0 12 12"><path d="M1 5 L4 2.5 L6 4.5 L9 1.5 M1 9 L4 6.5 L6 8" stroke="#c2c2c2" stroke-width="0.8" fill="none"/><ellipse cx="8.8" cy="6.8" rx="2.2" ry="1" fill="#d8d8d8" stroke="#bdbdbd" stroke-width="0.6"/><path d="M6.6 6.8 V10 A2.2 1 0 0 0 11 10 V6.8" fill="#dcdcdc" stroke="#bdbdbd" stroke-width="0.6"/></svg>
<div class="a" style="left:167px;top:99.0px;width:1433px;height:21.2px;background:#3a3d40;border-radius:3px 0 0 3px"></div>
<div class="a" style="left:167px;top:118.8px;width:1433px;height:1.4px;background:#252729;"></div>
<div class="a" style="left:168.7px;top:100.8px;width:1431.3px;height:18px;background:linear-gradient(#505458,#585c5f);border-radius:2px 0 0 2px"></div>
<div class="a" style="left:172.2px;top:104.39999999999999px;width:8.6px;height:9.8px;background:#494d50;"></div>
<svg style="left:172.9px;top:107.6px" width="7" height="3.8" viewBox="0 0 7 3.8"><path d="M0 0 H7 L3.5 3.8 Z" fill="#f6f6f6"/></svg>
<div class="t" style="left:186.1px;top:102.5px;transform-origin:0 50%;transform:scaleX(1.06);color:#d2d2d2;font-size:9.2px;font-weight:bold;">Dashboard</div>
<div class="a" style="left:167px;top:120px;width:4.8px;height:132.5px;background:#313131;"></div><div class="a" style="left:1596.2px;top:120px;width:3.8px;height:132.5px;background:#313131;"></div>
<div class="a" style="left:1550px;top:101.4px;width:29.5px;height:14.7px;background:#4d5154;"></div>
<svg style="left:1553.8px;top:103.6px" width="10.4" height="10.4" viewBox="0 0 10.4 10.4"><defs><radialGradient id="plg" cx="50%" cy="45%" r="55%"><stop offset="0" stop-color="#d2e44c"/><stop offset="0.6" stop-color="#a4d450"/><stop offset="1" stop-color="#54b860"/></radialGradient></defs><path d="M3.5 0.5 H6.9 V3.5 H9.9 V6.9 H6.9 V9.9 H3.5 V6.9 H0.5 V3.5 H3.5 Z" fill="url(#plg)" stroke="#2f9060" stroke-width="0.9" stroke-linejoin="round"/></svg>
<svg style="left:1567.95px;top:101.39999999999999px" width="13" height="14" viewBox="0 0 13 14"><defs><linearGradient id="rfg" x1="0" y1="0" x2="1" y2="1"><stop offset="0" stop-color="#ffe9a8"/><stop offset="0.5" stop-color="#f8b828"/><stop offset="1" stop-color="#c87c08"/></linearGradient></defs><path d="M4.5 4.0 L8.1 0.3 L7.9 2.6 C10.8 2.6 12.9 5 11.6 8.4 C11 6.6 10 5.7 8.0 5.4 L8.4 7.4 Z" fill="url(#rfg)" stroke="#b07408" stroke-width="0.45" stroke-linejoin="round"/><path d="M4.5 4.0 L8.1 0.3 L7.9 2.6 C10.8 2.6 12.9 5 11.6 8.4 C11 6.6 10 5.7 8.0 5.4 L8.4 7.4 Z" fill="url(#rfg)" stroke="#b07408" stroke-width="0.45" stroke-linejoin="round" transform="rotate(180 6.35 6.55)"/><path d="M5.6 3.9 L7.6 2 L7.6 3.4 C9.6 3.4 10.8 4.4 11 5.8" stroke="#fff6d8" stroke-width="0.8" fill="none" opacity="0.8"/><path d="M5.6 3.9 L7.6 2 L7.6 3.4 C9.6 3.4 10.8 4.4 11 5.8" stroke="#fff6d8" stroke-width="0.8" fill="none" opacity="0.8" transform="rotate(180 6.35 6.55)"/></svg>
<div class="a" style="left:1582px;top:102px;width:14px;height:14px;background:#f3f3f3;border:1px solid #fdfdfd"></div><svg style="left:1584px;top:104px" width="10" height="10" viewBox="0 0 10 10"><circle cx="3.6" cy="1.2" r="0.9" fill="#c4c4c4"/><path d="M3.6 2.5 V5.8 H6.5 L7.8 8.6 H9" stroke="#c4c4c4" stroke-width="0.9" fill="none"/><path d="M2.5 4.2 A2.8 2.8 0 1 0 6.6 7.5" stroke="#c4c4c4" stroke-width="0.9" fill="none"/></svg>
<div class="t" style="left:211.7px;top:125.3px;width:400px;text-align:center;transform-origin:50% 50%;transform:scaleX(1.065);color:#111;font-size:9.2px;font-weight:bold;">Used Java Heap Memory</div>
<div class="t" style="left:684px;top:125.3px;width:400px;text-align:center;transform-origin:50% 50%;transform:scaleX(1.065);color:#111;font-size:9.2px;font-weight:bold;">JVM CPU Usage</div>
<div class="t" style="left:1155px;top:125.3px;width:400px;text-align:center;transform-origin:50% 50%;transform:scaleX(1.065);color:#111;font-size:9.2px;font-weight:bold;">Live Set + Fragmentation</div>
<div class="a" style="left:176px;top:139px;width:1415.2px;height:92px;overflow:hidden;background:linear-gradient(#ffffff 0,#ffffff 11%,#f6f9fc 22%,#eff3f8 36%,#eef2f7 100%)">
<svg style="left:0;top:0" width="1414" height="92" viewBox="0 0 1414 92">
<defs><radialGradient id="g1f" cx="50%" cy="50%" r="50%"><stop offset="0" stop-color="#ffffff"/><stop offset="0.6" stop-color="#fcfdfe"/><stop offset="0.85" stop-color="#edf2fa"/><stop offset="1" stop-color="#dfe9f6"/></radialGradient><linearGradient id="g1r" x1="0.5" y1="0" x2="0.5" y2="1"><stop offset="0" stop-color="#e6edf7"/><stop offset="0.22" stop-color="#d0dff3"/><stop offset="0.5" stop-color="#a4c2ea"/><stop offset="1" stop-color="#9dbde6"/></linearGradient><linearGradient id="g1h" x1="0" y1="0" x2="0" y2="1"><stop offset="0" stop-color="#f4f4f4"/><stop offset="1" stop-color="#d8d8d8"/></linearGradient></defs><circle cx="235.7" cy="92.6" r="89.2" fill="url(#g1r)" stroke="#b4bcc8" stroke-width="0.8"/><circle cx="235.7" cy="90.6" r="75.5" fill="url(#g1f)"/><ellipse cx="235.7" cy="120.6" rx="84" ry="64" fill="#ffffff" opacity="0.45"/><line x1="161.54" y1="83.46" x2="150.59" y2="82.41" stroke="#5888de" stroke-width="0.95"/><line x1="168.35" y1="58.76" x2="158.40" y2="54.06" stroke="#5888de" stroke-width="0.95"/><line x1="181.13" y1="39.89" x2="173.07" y2="32.40" stroke="#5888de" stroke-width="0.95"/><line x1="196.66" y1="27.15" x2="190.90" y2="17.78" stroke="#5888de" stroke-width="0.95"/><line x1="215.67" y1="18.84" x2="212.71" y2="8.25" stroke="#5888de" stroke-width="0.95"/><line x1="235.70" y1="16.10" x2="235.70" y2="5.10" stroke="#5888de" stroke-width="0.95"/><line x1="255.73" y1="18.84" x2="258.69" y2="8.25" stroke="#5888de" stroke-width="0.95"/><line x1="274.74" y1="27.15" x2="280.50" y2="17.78" stroke="#5888de" stroke-width="0.95"/><line x1="290.27" y1="39.89" x2="298.33" y2="32.40" stroke="#5888de" stroke-width="0.95"/><line x1="303.05" y1="58.76" x2="313.00" y2="54.06" stroke="#5888de" stroke-width="0.95"/><line x1="309.86" y1="83.46" x2="320.81" y2="82.41" stroke="#5888de" stroke-width="0.95"/><path d="M158.93 83.48 A77.1 77.1 0 0 1 312.47 83.48" fill="none" stroke="#4aa5fb" stroke-width="4.6"/><text x="164.7" y="87.2" font-size="10.5" fill="#222" text-anchor="middle" transform="translate(164.7 0) scale(0.8 1) translate(-164.7 0)">0</text><text x="172.3" y="63.6" font-size="10.5" fill="#222" text-anchor="middle" transform="translate(172.3 0) scale(0.8 1) translate(-172.3 0)">10</text><text x="185.4" y="44.9" font-size="10.5" fill="#222" text-anchor="middle" transform="translate(185.4 0) scale(0.8 1) translate(-185.4 0)">20</text><text x="201.3" y="33.4" font-size="10.5" fill="#222" text-anchor="middle" transform="translate(201.3 0) scale(0.8 1) translate(-201.3 0)">30</text><text x="218.0" y="25.6" font-size="10.5" fill="#222" text-anchor="middle" transform="translate(218.0 0) scale(0.8 1) translate(-218.0 0)">40</text><text x="236.3" y="22.8" font-size="10.5" fill="#222" text-anchor="middle" transform="translate(236.3 0) scale(0.8 1) translate(-236.3 0)">50</text><text x="253.5" y="26.1" font-size="10.5" fill="#222" text-anchor="middle" transform="translate(253.5 0) scale(0.8 1) translate(-253.5 0)">60</text><text x="271.9" y="34.2" font-size="10.5" fill="#222" text-anchor="middle" transform="translate(271.9 0) scale(0.8 1) translate(-271.9 0)">70</text><text x="286.4" y="46.9" font-size="10.5" fill="#222" text-anchor="middle" transform="translate(286.4 0) scale(0.8 1) translate(-286.4 0)">80</text><text x="298.3" y="65.1" font-size="10.5" fill="#222" text-anchor="middle" transform="translate(298.3 0) scale(0.8 1) translate(-298.3 0)">90</text><text x="302.9" y="87.2" font-size="10.5" fill="#222" text-anchor="middle" transform="translate(302.9 0) scale(0.8 1) translate(-302.9 0)">100</text><text x="235.4" y="66.2" font-size="9.6" fill="#2a2a2a" text-anchor="middle">MiB</text><circle cx="198.89999999999998" cy="88.1" r="1.1" fill="#000"/><circle cx="273.09999999999997" cy="88.1" r="1.1" fill="#e01010"/><path d="M242.09 76.39 L256.37 30.55 L254.95 30.08 L239.05 75.38 Z" fill="#000"/><circle cx="235.7" cy="92.5" r="16.6" fill="url(#g1h)"/><circle cx="235.7" cy="90.6" r="3.3" fill="#4a7fd0" stroke="#3a3a3a" stroke-width="1.2"/><circle cx="235.7" cy="90.6" r="1.0" fill="#1f3f80"/>
<defs><linearGradient id="cpug" gradientUnits="userSpaceOnUse" x1="630.6" y1="0" x2="786.6" y2="0"><stop offset="0" stop-color="#3fe61e"/><stop offset="0.28" stop-color="#6fd028"/><stop offset="0.5" stop-color="#a8b040"/><stop offset="0.72" stop-color="#d07848"/><stop offset="0.92" stop-color="#e03018"/><stop offset="1" stop-color="#f00000"/></linearGradient>
<linearGradient id="liveg" gradientUnits="userSpaceOnUse" x1="1101.2" y1="0" x2="1257.2" y2="0"><stop offset="0" stop-color="#3cf020"/><stop offset="0.78" stop-color="#48e624"/><stop offset="0.9" stop-color="#a09030"/><stop offset="1" stop-color="#f01008"/></linearGradient></defs>
<defs><radialGradient id="g2f" cx="50%" cy="50%" r="50%"><stop offset="0" stop-color="#ffffff"/><stop offset="0.6" stop-color="#fcfdfe"/><stop offset="0.85" stop-color="#edf2fa"/><stop offset="1" stop-color="#dfe9f6"/></radialGradient><linearGradient id="g2r" x1="0.5" y1="0" x2="0.5" y2="1"><stop offset="0" stop-color="#e6edf7"/><stop offset="0.22" stop-color="#d0dff3"/><stop offset="0.5" stop-color="#a4c2ea"/><stop offset="1" stop-color="#9dbde6"/></linearGradient><linearGradient id="g2h" x1="0" y1="0" x2="0" y2="1"><stop offset="0" stop-color="#f4f4f4"/><stop offset="1" stop-color="#d8d8d8"/></linearGradient></defs><circle cx="708.1" cy="92.6" r="89.2" fill="url(#g2r)" stroke="#b4bcc8" stroke-width="0.8"/><circle cx="708.1" cy="90.6" r="75.5" fill="url(#g2f)"/><ellipse cx="708.1" cy="120.6" rx="84" ry="64" fill="#ffffff" opacity="0.45"/><line x1="633.94" y1="83.46" x2="622.99" y2="82.41" stroke="#5888de" stroke-width="0.95"/><line x1="640.75" y1="58.76" x2="630.80" y2="54.06" stroke="#5888de" stroke-width="0.95"/><line x1="653.53" y1="39.89" x2="645.47" y2="32.40" stroke="#5888de" stroke-width="0.95"/><line x1="669.06" y1="27.15" x2="663.30" y2="17.78" stroke="#5888de" stroke-width="0.95"/><line x1="688.07" y1="18.84" x2="685.11" y2="8.25" stroke="#5888de" stroke-width="0.95"/><line x1="708.10" y1="16.10" x2="708.10" y2="5.10" stroke="#5888de" stroke-width="0.95"/><line x1="728.13" y1="18.84" x2="731.09" y2="8.25" stroke="#5888de" stroke-width="0.95"/><line x1="747.14" y1="27.15" x2="752.90" y2="17.78" stroke="#5888de" stroke-width="0.95"/><line x1="762.67" y1="39.89" x2="770.73" y2="32.40" stroke="#5888de" stroke-width="0.95"/><line x1="775.45" y1="58.76" x2="785.40" y2="54.06" stroke="#5888de" stroke-width="0.95"/><line x1="782.26" y1="83.46" x2="793.21" y2="82.41" stroke="#5888de" stroke-width="0.95"/><path d="M631.43 83.49 A77.0 77.0 0 0 1 631.85 79.86" fill="none" stroke="#49e618" stroke-width="4.4"/><path d="M631.74 80.66 A77.0 77.0 0 0 1 632.30 77.05" fill="none" stroke="#4be519" stroke-width="4.4"/><path d="M632.16 77.84 A77.0 77.0 0 0 1 632.85 74.26" fill="none" stroke="#4ce41a" stroke-width="4.4"/><path d="M632.69 75.05 A77.0 77.0 0 0 1 633.51 71.49" fill="none" stroke="#4ee41b" stroke-width="4.4"/><path d="M633.31 72.27 A77.0 77.0 0 0 1 634.27 68.75" fill="none" stroke="#50e31c" stroke-width="4.4"/><path d="M634.04 69.52 A77.0 77.0 0 0 1 635.12 66.03" fill="none" stroke="#51e21d" stroke-width="4.4"/><path d="M634.87 66.80 A77.0 77.0 0 0 1 636.08 63.35" fill="none" stroke="#53e21e" stroke-width="4.4"/><path d="M635.80 64.11 A77.0 77.0 0 0 1 637.14 60.71" fill="none" stroke="#55e11e" stroke-width="4.4"/><path d="M636.83 61.46 A77.0 77.0 0 0 1 638.29 58.11" fill="none" stroke="#57e11f" stroke-width="4.4"/><path d="M637.95 58.84 A77.0 77.0 0 0 1 639.54 55.55" fill="none" stroke="#59e020" stroke-width="4.4"/><path d="M639.18 56.27 A77.0 77.0 0 0 1 640.88 53.04" fill="none" stroke="#5bde21" stroke-width="4.4"/><path d="M640.49 53.75 A77.0 77.0 0 0 1 642.31 50.59" fill="none" stroke="#5edc22" stroke-width="4.4"/><path d="M641.90 51.28 A77.0 77.0 0 0 1 643.84 48.18" fill="none" stroke="#61da23" stroke-width="4.4"/><path d="M643.40 48.86 A77.0 77.0 0 0 1 645.45 45.84" fill="none" stroke="#64d824" stroke-width="4.4"/><path d="M644.98 46.50 A77.0 77.0 0 0 1 647.14 43.55" fill="none" stroke="#67d625" stroke-width="4.4"/><path d="M646.66 44.19 A77.0 77.0 0 0 1 648.92 41.33" fill="none" stroke="#6ad426" stroke-width="4.4"/><path d="M648.41 41.95 A77.0 77.0 0 0 1 650.79 39.18" fill="none" stroke="#6dd227" stroke-width="4.4"/><path d="M650.25 39.78 A77.0 77.0 0 0 1 652.72 37.10" fill="none" stroke="#70d028" stroke-width="4.4"/><path d="M652.17 37.68 A77.0 77.0 0 0 1 654.74 35.09" fill="none" stroke="#73ce29" stroke-width="4.4"/><path d="M654.16 35.65 A77.0 77.0 0 0 1 656.83 33.15" fill="none" stroke="#76cb2a" stroke-width="4.4"/><path d="M656.23 33.69 A77.0 77.0 0 0 1 658.98 31.30" fill="none" stroke="#79c82b" stroke-width="4.4"/><path d="M658.37 31.82 A77.0 77.0 0 0 1 661.21 29.52" fill="none" stroke="#7dc52c" stroke-width="4.4"/><path d="M660.57 30.02 A77.0 77.0 0 0 1 663.50 27.83" fill="none" stroke="#80c32d" stroke-width="4.4"/><path d="M662.84 28.30 A77.0 77.0 0 0 1 665.85 26.23" fill="none" stroke="#83c02e" stroke-width="4.4"/><path d="M665.18 26.67 A77.0 77.0 0 0 1 668.26 24.71" fill="none" stroke="#87bd30" stroke-width="4.4"/><path d="M667.57 25.13 A77.0 77.0 0 0 1 670.72 23.28" fill="none" stroke="#89bb31" stroke-width="4.4"/><path d="M670.01 23.68 A77.0 77.0 0 0 1 673.23 21.95" fill="none" stroke="#8cba32" stroke-width="4.4"/><path d="M672.51 22.32 A77.0 77.0 0 0 1 675.79 20.71" fill="none" stroke="#8fb833" stroke-width="4.4"/><path d="M675.06 21.05 A77.0 77.0 0 0 1 678.39 19.56" fill="none" stroke="#91b634" stroke-width="4.4"/><path d="M677.65 19.88 A77.0 77.0 0 0 1 681.04 18.51" fill="none" stroke="#94b535" stroke-width="4.4"/><path d="M680.29 18.80 A77.0 77.0 0 0 1 683.72 17.56" fill="none" stroke="#97b336" stroke-width="4.4"/><path d="M682.96 17.82 A77.0 77.0 0 0 1 686.44 16.71" fill="none" stroke="#99b237" stroke-width="4.4"/><path d="M685.66 16.94 A77.0 77.0 0 0 1 689.18 15.96" fill="none" stroke="#9cb038" stroke-width="4.4"/><path d="M688.40 16.16 A77.0 77.0 0 0 1 691.95 15.31" fill="none" stroke="#9eae39" stroke-width="4.4"/><path d="M691.17 15.49 A77.0 77.0 0 0 1 694.75 14.77" fill="none" stroke="#a0ad39" stroke-width="4.4"/><path d="M693.95 14.91 A77.0 77.0 0 0 1 697.56 14.33" fill="none" stroke="#a3ab3a" stroke-width="4.4"/><path d="M696.76 14.44 A77.0 77.0 0 0 1 700.38 13.99" fill="none" stroke="#a5a93a" stroke-width="4.4"/><path d="M699.58 14.07 A77.0 77.0 0 0 1 703.22 13.75" fill="none" stroke="#a7a83b" stroke-width="4.4"/><path d="M702.41 13.81 A77.0 77.0 0 0 1 706.06 13.63" fill="none" stroke="#a9a63b" stroke-width="4.4"/><path d="M705.25 13.65 A77.0 77.0 0 0 1 708.91 13.60" fill="none" stroke="#aba53c" stroke-width="4.4"/><path d="M708.10 13.60 A77.0 77.0 0 0 1 711.75 13.69" fill="none" stroke="#ada33d" stroke-width="4.4"/><path d="M710.95 13.65 A77.0 77.0 0 0 1 714.59 13.87" fill="none" stroke="#b0a03e" stroke-width="4.4"/><path d="M713.79 13.81 A77.0 77.0 0 0 1 717.42 14.17" fill="none" stroke="#b29e3f" stroke-width="4.4"/><path d="M716.62 14.07 A77.0 77.0 0 0 1 720.24 14.56" fill="none" stroke="#b49c40" stroke-width="4.4"/><path d="M719.44 14.44 A77.0 77.0 0 0 1 723.04 15.06" fill="none" stroke="#b69a41" stroke-width="4.4"/><path d="M722.25 14.91 A77.0 77.0 0 0 1 725.82 15.67" fill="none" stroke="#b89842" stroke-width="4.4"/><path d="M725.03 15.49 A77.0 77.0 0 0 1 728.58 16.37" fill="none" stroke="#ba9643" stroke-width="4.4"/><path d="M727.80 16.16 A77.0 77.0 0 0 1 731.31 17.18" fill="none" stroke="#bc9344" stroke-width="4.4"/><path d="M730.54 16.94 A77.0 77.0 0 0 1 734.00 18.09" fill="none" stroke="#be9045" stroke-width="4.4"/><path d="M733.24 17.82 A77.0 77.0 0 0 1 736.66 19.09" fill="none" stroke="#c08d45" stroke-width="4.4"/><path d="M735.91 18.80 A77.0 77.0 0 0 1 739.29 20.20" fill="none" stroke="#c18a46" stroke-width="4.4"/><path d="M738.55 19.88 A77.0 77.0 0 0 1 741.87 21.40" fill="none" stroke="#c38646" stroke-width="4.4"/><path d="M741.14 21.05 A77.0 77.0 0 0 1 744.40 22.69" fill="none" stroke="#c48347" stroke-width="4.4"/><path d="M743.69 22.32 A77.0 77.0 0 0 1 746.88 24.08" fill="none" stroke="#c68047" stroke-width="4.4"/><path d="M746.19 23.68 A77.0 77.0 0 0 1 749.32 25.56" fill="none" stroke="#c87d48" stroke-width="4.4"/><path d="M748.63 25.13 A77.0 77.0 0 0 1 751.69 27.13" fill="none" stroke="#c97947" stroke-width="4.4"/><path d="M751.02 26.67 A77.0 77.0 0 0 1 754.01 28.78" fill="none" stroke="#cb7546" stroke-width="4.4"/><path d="M753.36 28.30 A77.0 77.0 0 0 1 756.26 30.52" fill="none" stroke="#cc7245" stroke-width="4.4"/><path d="M755.63 30.02 A77.0 77.0 0 0 1 758.45 32.34" fill="none" stroke="#ce6e44" stroke-width="4.4"/><path d="M757.83 31.82 A77.0 77.0 0 0 1 760.56 34.24" fill="none" stroke="#d06a43" stroke-width="4.4"/><path d="M759.97 33.69 A77.0 77.0 0 0 1 762.61 36.22" fill="none" stroke="#d16642" stroke-width="4.4"/><path d="M762.04 35.65 A77.0 77.0 0 0 1 764.58 38.27" fill="none" stroke="#d36241" stroke-width="4.4"/><path d="M764.03 37.68 A77.0 77.0 0 0 1 766.48 40.39" fill="none" stroke="#d55e3e" stroke-width="4.4"/><path d="M765.95 39.78 A77.0 77.0 0 0 1 768.29 42.58" fill="none" stroke="#d7583a" stroke-width="4.4"/><path d="M767.79 41.95 A77.0 77.0 0 0 1 770.03 44.84" fill="none" stroke="#d95336" stroke-width="4.4"/><path d="M769.54 44.19 A77.0 77.0 0 0 1 771.68 47.16" fill="none" stroke="#db4d32" stroke-width="4.4"/><path d="M771.22 46.50 A77.0 77.0 0 0 1 773.24 49.54" fill="none" stroke="#dd482e" stroke-width="4.4"/><path d="M772.80 48.86 A77.0 77.0 0 0 1 774.71 51.97" fill="none" stroke="#df422a" stroke-width="4.4"/><path d="M774.30 51.28 A77.0 77.0 0 0 1 776.09 54.46" fill="none" stroke="#e33822" stroke-width="4.4"/><path d="M775.71 53.75 A77.0 77.0 0 0 1 777.38 57.00" fill="none" stroke="#e92a17" stroke-width="4.4"/><path d="M777.02 56.27 A77.0 77.0 0 0 1 778.57 59.58" fill="none" stroke="#ee1d0c" stroke-width="4.4"/><path d="M778.25 58.84 A77.0 77.0 0 0 1 779.67 62.20" fill="none" stroke="#f11707" stroke-width="4.4"/><path d="M779.37 61.46 A77.0 77.0 0 0 1 780.67 64.87" fill="none" stroke="#f31507" stroke-width="4.4"/><path d="M780.40 64.11 A77.0 77.0 0 0 1 781.57 67.57" fill="none" stroke="#f41306" stroke-width="4.4"/><path d="M781.33 66.80 A77.0 77.0 0 0 1 782.38 70.30" fill="none" stroke="#f61105" stroke-width="4.4"/><path d="M782.16 69.52 A77.0 77.0 0 0 1 783.07 73.06" fill="none" stroke="#f81004" stroke-width="4.4"/><path d="M782.89 72.27 A77.0 77.0 0 0 1 783.67 75.84" fill="none" stroke="#f90e03" stroke-width="4.4"/><path d="M783.51 75.05 A77.0 77.0 0 0 1 784.17 78.64" fill="none" stroke="#fb0c02" stroke-width="4.4"/><path d="M784.04 77.84 A77.0 77.0 0 0 1 784.56 81.46" fill="none" stroke="#fd0a01" stroke-width="4.4"/><path d="M784.46 80.66 A77.0 77.0 0 0 1 784.77 83.49" fill="none" stroke="#fe0900" stroke-width="4.4"/><text x="636.5" y="87.2" font-size="10.5" fill="#222" text-anchor="middle" transform="translate(636.5 0) scale(0.8 1) translate(-636.5 0)">0</text><text x="642.0" y="63.6" font-size="10.5" fill="#222" text-anchor="middle" transform="translate(642.0 0) scale(0.8 1) translate(-642.0 0)">1</text><text x="655.1" y="44.9" font-size="10.5" fill="#222" text-anchor="middle" transform="translate(655.1 0) scale(0.8 1) translate(-655.1 0)">2</text><text x="671.0" y="33.4" font-size="10.5" fill="#222" text-anchor="middle" transform="translate(671.0 0) scale(0.8 1) translate(-671.0 0)">3</text><text x="687.7" y="25.6" font-size="10.5" fill="#222" text-anchor="middle" transform="translate(687.7 0) scale(0.8 1) translate(-687.7 0)">4</text><text x="707.4" y="22.8" font-size="10.5" fill="#222" text-anchor="middle" transform="translate(707.4 0) scale(0.8 1) translate(-707.4 0)">5</text><text x="726.5" y="26.1" font-size="10.5" fill="#222" text-anchor="middle" transform="translate(726.5 0) scale(0.8 1) translate(-726.5 0)">6</text><text x="743.8" y="34.2" font-size="10.5" fill="#222" text-anchor="middle" transform="translate(743.8 0) scale(0.8 1) translate(-743.8 0)">7</text><text x="758.8" y="46.9" font-size="10.5" fill="#222" text-anchor="middle" transform="translate(758.8 0) scale(0.8 1) translate(-758.8 0)">8</text><text x="770.7" y="65.1" font-size="10.5" fill="#222" text-anchor="middle" transform="translate(770.7 0) scale(0.8 1) translate(-770.7 0)">9</text><text x="775.9" y="87.2" font-size="10.5" fill="#222" text-anchor="middle" transform="translate(775.9 0) scale(0.8 1) translate(-775.9 0)">10</text><text x="707.8" y="66.2" font-size="9.6" fill="#2a2a2a" text-anchor="middle">%</text><circle cx="671.3000000000001" cy="88.1" r="1.1" fill="#000"/><circle cx="745.5" cy="88.1" r="1.1" fill="#e01010"/><path d="M702.12 77.88 L675.94 35.27 L675.34 35.62 L699.88 79.19 Z" fill="#8a8a8a"/><path d="M693.10 86.39 L645.65 79.05 L645.40 80.53 L692.55 89.54 Z" fill="#000"/><circle cx="708.1" cy="92.5" r="16.6" fill="url(#g2h)"/><circle cx="708.1" cy="90.6" r="3.3" fill="#4a7fd0" stroke="#3a3a3a" stroke-width="1.2"/><circle cx="708.1" cy="90.6" r="1.0" fill="#1f3f80"/>
<defs><radialGradient id="g3f" cx="50%" cy="50%" r="50%"><stop offset="0" stop-color="#ffffff"/><stop offset="0.6" stop-color="#fcfdfe"/><stop offset="0.85" stop-color="#edf2fa"/><stop offset="1" stop-color="#dfe9f6"/></radialGradient><linearGradient id="g3r" x1="0.5" y1="0" x2="0.5" y2="1"><stop offset="0" stop-color="#e6edf7"/><stop offset="0.22" stop-color="#d0dff3"/><stop offset="0.5" stop-color="#a4c2ea"/><stop offset="1" stop-color="#9dbde6"/></linearGradient><linearGradient id="g3h" x1="0" y1="0" x2="0" y2="1"><stop offset="0" stop-color="#f4f4f4"/><stop offset="1" stop-color="#d8d8d8"/></linearGradient></defs><circle cx="1178.7" cy="92.6" r="89.2" fill="url(#g3r)" stroke="#b4bcc8" stroke-width="0.8"/><circle cx="1178.7" cy="90.6" r="75.5" fill="url(#g3f)"/><ellipse cx="1178.7" cy="120.6" rx="84" ry="64" fill="#ffffff" opacity="0.45"/><line x1="1104.54" y1="83.46" x2="1093.59" y2="82.41" stroke="#5888de" stroke-width="0.95"/><line x1="1111.35" y1="58.76" x2="1101.40" y2="54.06" stroke="#5888de" stroke-width="0.95"/><line x1="1124.13" y1="39.89" x2="1116.07" y2="32.40" stroke="#5888de" stroke-width="0.95"/><line x1="1139.66" y1="27.15" x2="1133.90" y2="17.78" stroke="#5888de" stroke-width="0.95"/><line x1="1158.67" y1="18.84" x2="1155.71" y2="8.25" stroke="#5888de" stroke-width="0.95"/><line x1="1178.70" y1="16.10" x2="1178.70" y2="5.10" stroke="#5888de" stroke-width="0.95"/><line x1="1198.73" y1="18.84" x2="1201.69" y2="8.25" stroke="#5888de" stroke-width="0.95"/><line x1="1217.74" y1="27.15" x2="1223.50" y2="17.78" stroke="#5888de" stroke-width="0.95"/><line x1="1233.27" y1="39.89" x2="1241.33" y2="32.40" stroke="#5888de" stroke-width="0.95"/><line x1="1246.05" y1="58.76" x2="1256.00" y2="54.06" stroke="#5888de" stroke-width="0.95"/><line x1="1252.86" y1="83.46" x2="1263.81" y2="82.41" stroke="#5888de" stroke-width="0.95"/><path d="M1102.03 83.49 A77.0 77.0 0 0 1 1102.45 79.86" fill="none" stroke="#50f020" stroke-width="4.4"/><path d="M1102.34 80.66 A77.0 77.0 0 0 1 1102.90 77.05" fill="none" stroke="#50f020" stroke-width="4.4"/><path d="M1102.76 77.84 A77.0 77.0 0 0 1 1103.45 74.26" fill="none" stroke="#50f020" stroke-width="4.4"/><path d="M1103.29 75.05 A77.0 77.0 0 0 1 1104.11 71.49" fill="none" stroke="#50f020" stroke-width="4.4"/><path d="M1103.91 72.27 A77.0 77.0 0 0 1 1104.87 68.75" fill="none" stroke="#50f020" stroke-width="4.4"/><path d="M1104.64 69.52 A77.0 77.0 0 0 1 1105.72 66.03" fill="none" stroke="#50f020" stroke-width="4.4"/><path d="M1105.47 66.80 A77.0 77.0 0 0 1 1106.68 63.35" fill="none" stroke="#50f020" stroke-width="4.4"/><path d="M1106.40 64.11 A77.0 77.0 0 0 1 1107.74 60.71" fill="none" stroke="#50f020" stroke-width="4.4"/><path d="M1107.43 61.46 A77.0 77.0 0 0 1 1108.89 58.11" fill="none" stroke="#50f020" stroke-width="4.4"/><path d="M1108.55 58.84 A77.0 77.0 0 0 1 1110.14 55.55" fill="none" stroke="#50f020" stroke-width="4.4"/><path d="M1109.78 56.27 A77.0 77.0 0 0 1 1111.48 53.04" fill="none" stroke="#50f020" stroke-width="4.4"/><path d="M1111.09 53.75 A77.0 77.0 0 0 1 1112.91 50.59" fill="none" stroke="#50f020" stroke-width="4.4"/><path d="M1112.50 51.28 A77.0 77.0 0 0 1 1114.44 48.18" fill="none" stroke="#50f020" stroke-width="4.4"/><path d="M1114.00 48.86 A77.0 77.0 0 0 1 1116.05 45.84" fill="none" stroke="#50f020" stroke-width="4.4"/><path d="M1115.58 46.50 A77.0 77.0 0 0 1 1117.74 43.55" fill="none" stroke="#50f020" stroke-width="4.4"/><path d="M1117.26 44.19 A77.0 77.0 0 0 1 1119.52 41.33" fill="none" stroke="#50f020" stroke-width="4.4"/><path d="M1119.01 41.95 A77.0 77.0 0 0 1 1121.39 39.18" fill="none" stroke="#50f020" stroke-width="4.4"/><path d="M1120.85 39.78 A77.0 77.0 0 0 1 1123.32 37.10" fill="none" stroke="#50f020" stroke-width="4.4"/><path d="M1122.77 37.68 A77.0 77.0 0 0 1 1125.34 35.09" fill="none" stroke="#50f020" stroke-width="4.4"/><path d="M1124.76 35.65 A77.0 77.0 0 0 1 1127.43 33.15" fill="none" stroke="#50f020" stroke-width="4.4"/><path d="M1126.83 33.69 A77.0 77.0 0 0 1 1129.58 31.30" fill="none" stroke="#50f020" stroke-width="4.4"/><path d="M1128.97 31.82 A77.0 77.0 0 0 1 1131.81 29.52" fill="none" stroke="#50f020" stroke-width="4.4"/><path d="M1131.17 30.02 A77.0 77.0 0 0 1 1134.10 27.83" fill="none" stroke="#50f020" stroke-width="4.4"/><path d="M1133.44 28.30 A77.0 77.0 0 0 1 1136.45 26.23" fill="none" stroke="#50f020" stroke-width="4.4"/><path d="M1135.78 26.67 A77.0 77.0 0 0 1 1138.86 24.71" fill="none" stroke="#50f020" stroke-width="4.4"/><path d="M1138.17 25.13 A77.0 77.0 0 0 1 1141.32 23.28" fill="none" stroke="#50f020" stroke-width="4.4"/><path d="M1140.61 23.68 A77.0 77.0 0 0 1 1143.83 21.95" fill="none" stroke="#50f020" stroke-width="4.4"/><path d="M1143.11 22.32 A77.0 77.0 0 0 1 1146.39 20.71" fill="none" stroke="#50f020" stroke-width="4.4"/><path d="M1145.66 21.05 A77.0 77.0 0 0 1 1148.99 19.56" fill="none" stroke="#50f020" stroke-width="4.4"/><path d="M1148.25 19.88 A77.0 77.0 0 0 1 1151.64 18.51" fill="none" stroke="#50f020" stroke-width="4.4"/><path d="M1150.89 18.80 A77.0 77.0 0 0 1 1154.32 17.56" fill="none" stroke="#50f020" stroke-width="4.4"/><path d="M1153.56 17.82 A77.0 77.0 0 0 1 1157.04 16.71" fill="none" stroke="#50f020" stroke-width="4.4"/><path d="M1156.26 16.94 A77.0 77.0 0 0 1 1159.78 15.96" fill="none" stroke="#50f020" stroke-width="4.4"/><path d="M1159.00 16.16 A77.0 77.0 0 0 1 1162.55 15.31" fill="none" stroke="#50f020" stroke-width="4.4"/><path d="M1161.77 15.49 A77.0 77.0 0 0 1 1165.35 14.77" fill="none" stroke="#50f020" stroke-width="4.4"/><path d="M1164.55 14.91 A77.0 77.0 0 0 1 1168.16 14.33" fill="none" stroke="#50f020" stroke-width="4.4"/><path d="M1167.36 14.44 A77.0 77.0 0 0 1 1170.98 13.99" fill="none" stroke="#50f020" stroke-width="4.4"/><path d="M1170.18 14.07 A77.0 77.0 0 0 1 1173.82 13.75" fill="none" stroke="#50f020" stroke-width="4.4"/><path d="M1173.01 13.81 A77.0 77.0 0 0 1 1176.66 13.63" fill="none" stroke="#50f020" stroke-width="4.4"/><path d="M1175.85 13.65 A77.0 77.0 0 0 1 1179.51 13.60" fill="none" stroke="#50f020" stroke-width="4.4"/><path d="M1178.70 13.60 A77.0 77.0 0 0 1 1182.35 13.69" fill="none" stroke="#50f020" stroke-width="4.4"/><path d="M1181.55 13.65 A77.0 77.0 0 0 1 1185.19 13.87" fill="none" stroke="#50f020" stroke-width="4.4"/><path d="M1184.39 13.81 A77.0 77.0 0 0 1 1188.02 14.17" fill="none" stroke="#50f020" stroke-width="4.4"/><path d="M1187.22 14.07 A77.0 77.0 0 0 1 1190.84 14.56" fill="none" stroke="#50f020" stroke-width="4.4"/><path d="M1190.04 14.44 A77.0 77.0 0 0 1 1193.64 15.06" fill="none" stroke="#50f020" stroke-width="4.4"/><path d="M1192.85 14.91 A77.0 77.0 0 0 1 1196.42 15.67" fill="none" stroke="#50f020" stroke-width="4.4"/><path d="M1195.63 15.49 A77.0 77.0 0 0 1 1199.18 16.37" fill="none" stroke="#50f020" stroke-width="4.4"/><path d="M1198.40 16.16 A77.0 77.0 0 0 1 1201.91 17.18" fill="none" stroke="#50f020" stroke-width="4.4"/><path d="M1201.14 16.94 A77.0 77.0 0 0 1 1204.60 18.09" fill="none" stroke="#50f020" stroke-width="4.4"/><path d="M1203.84 17.82 A77.0 77.0 0 0 1 1207.26 19.09" fill="none" stroke="#50f020" stroke-width="4.4"/><path d="M1206.51 18.80 A77.0 77.0 0 0 1 1209.89 20.20" fill="none" stroke="#50f020" stroke-width="4.4"/><path d="M1209.15 19.88 A77.0 77.0 0 0 1 1212.47 21.40" fill="none" stroke="#50f020" stroke-width="4.4"/><path d="M1211.74 21.05 A77.0 77.0 0 0 1 1215.00 22.69" fill="none" stroke="#50f020" stroke-width="4.4"/><path d="M1214.29 22.32 A77.0 77.0 0 0 1 1217.48 24.08" fill="none" stroke="#50f020" stroke-width="4.4"/><path d="M1216.79 23.68 A77.0 77.0 0 0 1 1219.92 25.56" fill="none" stroke="#50f020" stroke-width="4.4"/><path d="M1219.23 25.13 A77.0 77.0 0 0 1 1222.29 27.13" fill="none" stroke="#50f020" stroke-width="4.4"/><path d="M1221.62 26.67 A77.0 77.0 0 0 1 1224.61 28.78" fill="none" stroke="#50f020" stroke-width="4.4"/><path d="M1223.96 28.30 A77.0 77.0 0 0 1 1226.86 30.52" fill="none" stroke="#50f020" stroke-width="4.4"/><path d="M1226.23 30.02 A77.0 77.0 0 0 1 1229.05 32.34" fill="none" stroke="#50f020" stroke-width="4.4"/><path d="M1228.43 31.82 A77.0 77.0 0 0 1 1231.16 34.24" fill="none" stroke="#57e922" stroke-width="4.4"/><path d="M1230.57 33.69 A77.0 77.0 0 0 1 1233.21 36.22" fill="none" stroke="#5de324" stroke-width="4.4"/><path d="M1232.64 35.65 A77.0 77.0 0 0 1 1235.18 38.27" fill="none" stroke="#64dc27" stroke-width="4.4"/><path d="M1234.63 37.68 A77.0 77.0 0 0 1 1237.08 40.39" fill="none" stroke="#6cd329" stroke-width="4.4"/><path d="M1236.55 39.78 A77.0 77.0 0 0 1 1238.89 42.58" fill="none" stroke="#75c82b" stroke-width="4.4"/><path d="M1238.39 41.95 A77.0 77.0 0 0 1 1240.63 44.84" fill="none" stroke="#7fbc2d" stroke-width="4.4"/><path d="M1240.14 44.19 A77.0 77.0 0 0 1 1242.28 47.16" fill="none" stroke="#89b12f" stroke-width="4.4"/><path d="M1241.82 46.50 A77.0 77.0 0 0 1 1243.84 49.54" fill="none" stroke="#91a530" stroke-width="4.4"/><path d="M1243.40 48.86 A77.0 77.0 0 0 1 1245.31 51.97" fill="none" stroke="#979a2e" stroke-width="4.4"/><path d="M1244.90 51.28 A77.0 77.0 0 0 1 1246.69 54.46" fill="none" stroke="#9d8e2c" stroke-width="4.4"/><path d="M1246.31 53.75 A77.0 77.0 0 0 1 1247.98 57.00" fill="none" stroke="#a3832a" stroke-width="4.4"/><path d="M1247.62 56.27 A77.0 77.0 0 0 1 1249.17 59.58" fill="none" stroke="#a97728" stroke-width="4.4"/><path d="M1248.85 58.84 A77.0 77.0 0 0 1 1250.27 62.20" fill="none" stroke="#b46922" stroke-width="4.4"/><path d="M1249.97 61.46 A77.0 77.0 0 0 1 1251.27 64.87" fill="none" stroke="#c05a1c" stroke-width="4.4"/><path d="M1251.00 64.11 A77.0 77.0 0 0 1 1252.17 67.57" fill="none" stroke="#cb4c17" stroke-width="4.4"/><path d="M1251.93 66.80 A77.0 77.0 0 0 1 1252.98 70.30" fill="none" stroke="#d73e14" stroke-width="4.4"/><path d="M1252.76 69.52 A77.0 77.0 0 0 1 1253.67 73.06" fill="none" stroke="#e22f11" stroke-width="4.4"/><path d="M1253.49 72.27 A77.0 77.0 0 0 1 1254.27 75.84" fill="none" stroke="#eb250f" stroke-width="4.4"/><path d="M1254.11 75.05 A77.0 77.0 0 0 1 1254.77 78.64" fill="none" stroke="#f11f0d" stroke-width="4.4"/><path d="M1254.64 77.84 A77.0 77.0 0 0 1 1255.16 81.46" fill="none" stroke="#f7180b" stroke-width="4.4"/><path d="M1255.06 80.66 A77.0 77.0 0 0 1 1255.37 83.49" fill="none" stroke="#fd1309" stroke-width="4.4"/><text x="1107.7" y="87.2" font-size="10.5" fill="#222" text-anchor="middle" transform="translate(1107.7 0) scale(0.8 1) translate(-1107.7 0)">0</text><text x="1115.3" y="63.6" font-size="10.5" fill="#222" text-anchor="middle" transform="translate(1115.3 0) scale(0.8 1) translate(-1115.3 0)">10</text><text x="1128.4" y="44.9" font-size="10.5" fill="#222" text-anchor="middle" transform="translate(1128.4 0) scale(0.8 1) translate(-1128.4 0)">20</text><text x="1144.3" y="33.4" font-size="10.5" fill="#222" text-anchor="middle" transform="translate(1144.3 0) scale(0.8 1) translate(-1144.3 0)">30</text><text x="1161.0" y="25.6" font-size="10.5" fill="#222" text-anchor="middle" transform="translate(1161.0 0) scale(0.8 1) translate(-1161.0 0)">40</text><text x="1179.3" y="22.8" font-size="10.5" fill="#222" text-anchor="middle" transform="translate(1179.3 0) scale(0.8 1) translate(-1179.3 0)">50</text><text x="1196.5" y="26.1" font-size="10.5" fill="#222" text-anchor="middle" transform="translate(1196.5 0) scale(0.8 1) translate(-1196.5 0)">60</text><text x="1214.9" y="34.2" font-size="10.5" fill="#222" text-anchor="middle" transform="translate(1214.9 0) scale(0.8 1) translate(-1214.9 0)">70</text><text x="1229.4" y="46.9" font-size="10.5" fill="#222" text-anchor="middle" transform="translate(1229.4 0) scale(0.8 1) translate(-1229.4 0)">80</text><text x="1241.3" y="65.1" font-size="10.5" fill="#222" text-anchor="middle" transform="translate(1241.3 0) scale(0.8 1) translate(-1241.3 0)">90</text><text x="1245.9" y="87.2" font-size="10.5" fill="#222" text-anchor="middle" transform="translate(1245.9 0) scale(0.8 1) translate(-1245.9 0)">100</text><text x="1178.4" y="66.2" font-size="9.6" fill="#2a2a2a" text-anchor="middle">%</text><circle cx="1141.9" cy="88.1" r="1.1" fill="#000"/><circle cx="1216.1000000000001" cy="88.1" r="1.1" fill="#e01010"/><path d="M1189.49 79.36 L1218.35 40.99 L1217.16 40.07 L1186.97 77.39 Z" fill="#000"/><circle cx="1178.7" cy="92.5" r="16.6" fill="url(#g3h)"/><circle cx="1178.7" cy="90.6" r="3.3" fill="#4a7fd0" stroke="#3a3a3a" stroke-width="1.2"/><circle cx="1178.7" cy="90.6" r="1.0" fill="#1f3f80"/>
</svg></div>
<div class="t" style="left:211.2px;top:234.2px;width:400px;text-align:center;transform-origin:50% 50%;transform:scaleX(1.005);color:#b4b4b4;font-size:9.4px;-webkit-text-stroke:0.28px;">Now: 61.7 MiB&nbsp;&nbsp; Max: 61.7 MiB</div>
<div class="t" style="left:679px;top:234.2px;width:400px;text-align:center;transform-origin:50% 50%;transform:scaleX(1.005);color:#b4b4b4;font-size:9.4px;-webkit-text-stroke:0.28px;">Now: 0.354 %&nbsp;&nbsp; Max: 3.07 %</div>
<div class="t" style="left:1154px;top:234.2px;width:400px;text-align:center;transform-origin:50% 50%;transform:scaleX(1.005);color:#b4b4b4;font-size:9.4px;-webkit-text-stroke:0.28px;">Now: 74.1 %&nbsp;&nbsp; Max: 74.1 %</div>
<div class="a" style="left:167px;top:257.2px;width:1433px;height:20.8px;background:#3a3d40;border-radius:3px 0 0 3px"></div>
<div class="a" style="left:167px;top:276.6px;width:1433px;height:1.4px;background:#252729;"></div>
<div class="a" style="left:168.7px;top:259px;width:1431.3px;height:17.6px;background:linear-gradient(#505458,#585c5f);border-radius:2px 0 0 2px"></div>
<div class="a" style="left:172.2px;top:262.6px;width:8.6px;height:9.8px;background:#494d50;"></div>
<svg style="left:172.9px;top:265.8px" width="7" height="3.8" viewBox="0 0 7 3.8"><path d="M0 0 H7 L3.5 3.8 Z" fill="#f6f6f6"/></svg>
<div class="t" style="left:186.1px;top:260.5px;transform-origin:0 50%;transform:scaleX(1.06);color:#d2d2d2;font-size:9.2px;font-weight:bold;">Processor</div>
<div class="a" style="left:167px;top:278px;width:4.8px;height:141px;background:#313131;"></div><div class="a" style="left:1596.2px;top:278px;width:3.8px;height:141px;background:#313131;"></div>
<div class="a" style="left:1550px;top:259.4px;width:29.5px;height:14.7px;background:#4d5154;"></div>
<svg style="left:1552.0px;top:261.7px" width="10.4" height="10.4" viewBox="0 0 10.4 10.4"><defs><radialGradient id="plg" cx="50%" cy="45%" r="55%"><stop offset="0" stop-color="#d2e44c"/><stop offset="0.6" stop-color="#a4d450"/><stop offset="1" stop-color="#54b860"/></radialGradient></defs><path d="M3.5 0.5 H6.9 V3.5 H9.9 V6.9 H6.9 V9.9 H3.5 V6.9 H0.5 V3.5 H3.5 Z" fill="url(#plg)" stroke="#2f9060" stroke-width="0.9" stroke-linejoin="round"/></svg>
<svg style="left:1566.0500000000002px;top:259.5px" width="13" height="14" viewBox="0 0 13 14"><defs><linearGradient id="rfg" x1="0" y1="0" x2="1" y2="1"><stop offset="0" stop-color="#ffe9a8"/><stop offset="0.5" stop-color="#f8b828"/><stop offset="1" stop-color="#c87c08"/></linearGradient></defs><path d="M4.5 4.0 L8.1 0.3 L7.9 2.6 C10.8 2.6 12.9 5 11.6 8.4 C11 6.6 10 5.7 8.0 5.4 L8.4 7.4 Z" fill="url(#rfg)" stroke="#b07408" stroke-width="0.45" stroke-linejoin="round"/><path d="M4.5 4.0 L8.1 0.3 L7.9 2.6 C10.8 2.6 12.9 5 11.6 8.4 C11 6.6 10 5.7 8.0 5.4 L8.4 7.4 Z" fill="url(#rfg)" stroke="#b07408" stroke-width="0.45" stroke-linejoin="round" transform="rotate(180 6.35 6.55)"/><path d="M5.6 3.9 L7.6 2 L7.6 3.4 C9.6 3.4 10.8 4.4 11 5.8" stroke="#fff6d8" stroke-width="0.8" fill="none" opacity="0.8"/><path d="M5.6 3.9 L7.6 2 L7.6 3.4 C9.6 3.4 10.8 4.4 11 5.8" stroke="#fff6d8" stroke-width="0.8" fill="none" opacity="0.8" transform="rotate(180 6.35 6.55)"/></svg>
<div class="a" style="left:1580.7px;top:260px;width:13.6px;height:14px;background:#f3f3f3;border:1px solid #fdfdfd"></div><svg style="left:1582.7px;top:262px" width="10" height="10" viewBox="0 0 10 10"><circle cx="3.6" cy="1.2" r="0.9" fill="#c4c4c4"/><path d="M3.6 2.5 V5.8 H6.5 L7.8 8.6 H9" stroke="#c4c4c4" stroke-width="0.9" fill="none"/><path d="M2.5 4.2 A2.8 2.8 0 1 0 6.6 7.5" stroke="#c4c4c4" stroke-width="0.9" fill="none"/></svg>
<div class="a" style="left:176px;top:284px;width:1222px;height:130.5px;background:#fff;overflow:hidden">
<svg style="left:0;top:0" width="1222" height="130.5" viewBox="176 284 1222 130.5">
<line x1="207.3" y1="292.2" x2="1398" y2="292.2" stroke="#8e8e8e" stroke-width="0.9" stroke-dasharray="4.1 2.3"/>
<line x1="203.8" y1="292.2" x2="207.3" y2="292.2" stroke="#444" stroke-width="1"/>
<line x1="207.3" y1="312.52" x2="1398" y2="312.52" stroke="#8e8e8e" stroke-width="0.9" stroke-dasharray="4.1 2.3"/>
<line x1="203.8" y1="312.52" x2="207.3" y2="312.52" stroke="#444" stroke-width="1"/>
<line x1="207.3" y1="332.84" x2="1398" y2="332.84" stroke="#8e8e8e" stroke-width="0.9" stroke-dasharray="4.1 2.3"/>
<line x1="203.8" y1="332.84" x2="207.3" y2="332.84" stroke="#444" stroke-width="1"/>
<line x1="207.3" y1="353.15999999999997" x2="1398" y2="353.15999999999997" stroke="#8e8e8e" stroke-width="0.9" stroke-dasharray="4.1 2.3"/>
<line x1="203.8" y1="353.15999999999997" x2="207.3" y2="353.15999999999997" stroke="#444" stroke-width="1"/>
<line x1="207.3" y1="373.48" x2="1398" y2="373.48" stroke="#8e8e8e" stroke-width="0.9" stroke-dasharray="4.1 2.3"/>
<line x1="203.8" y1="373.48" x2="207.3" y2="373.48" stroke="#444" stroke-width="1"/>
<line x1="203.8" y1="393.79999999999995" x2="207.3" y2="393.79999999999995" stroke="#444" stroke-width="1"/>
<line x1="207.3" y1="290.2" x2="207.3" y2="394.4" stroke="#3c3c3c" stroke-width="0.9"/>
<line x1="207.3" y1="393.9" x2="842" y2="393.9" stroke="#7c7c7c" stroke-width="1.1"/>
<line x1="842" y1="393.9" x2="1398" y2="393.9" stroke="#cfcfff" stroke-width="1.3"/>
<path d="M802.6 393.5 L821 390.5 L841 393.5" stroke="#d4d4ff" stroke-width="0.8" fill="none"/>
<line x1="286.4" y1="392.09999999999997" x2="286.4" y2="395.09999999999997" stroke="#222" stroke-width="0.9"/>
<line x1="425.29999999999995" y1="392.09999999999997" x2="425.29999999999995" y2="395.09999999999997" stroke="#222" stroke-width="0.9"/>
<line x1="564.2" y1="392.09999999999997" x2="564.2" y2="395.09999999999997" stroke="#222" stroke-width="0.9"/>
<line x1="703.1" y1="392.09999999999997" x2="703.1" y2="395.09999999999997" stroke="#222" stroke-width="0.9"/>
<line x1="842.0" y1="392.09999999999997" x2="842.0" y2="395.09999999999997" stroke="#222" stroke-width="0.9"/>
<line x1="980.9" y1="392.09999999999997" x2="980.9" y2="395.09999999999997" stroke="#222" stroke-width="0.9"/>
<line x1="1119.8000000000002" y1="392.09999999999997" x2="1119.8000000000002" y2="395.09999999999997" stroke="#222" stroke-width="0.9"/>
<line x1="1258.7" y1="392.09999999999997" x2="1258.7" y2="395.09999999999997" stroke="#222" stroke-width="0.9"/>
<line x1="1397.6" y1="392.09999999999997" x2="1397.6" y2="395.09999999999997" stroke="#222" stroke-width="0.9"/>
<path d="M802.6 358.8 L804.1 350.3 L841.9 374.5 L881.0 369.5 L901.4 367.9 L921.8 363.6 L941.7 362.9 L960.9 375.5 L980.9 374.7 L1000.6 370.4 L1020.6 377.2 L1040.6 378.4 L1060.7 374.5 L1078.8 376.2 L1100.7 376.4 L1119.5 380.5 L1139.8 376.4 L1159.8 378.2 L1179.1 366.2 L1199.5 375.5 L1219.5 379.0 L1239.2 369.1 L1258.6 358.0 L1279.0 356.3 L1298.3 352.0 L1318.7 356.3 L1338.0 374.5 L1358.4 375.5 L1377.8 378.2 L1398.1 368.7" stroke="#3a3ab8" stroke-width="1.0" fill="none" stroke-linejoin="round"/>
<text x="201.9" y="295.4" font-size="9.6" fill="#222" text-anchor="end" transform="translate(201.9 0) scale(0.826 1) translate(-201.9 0)">100 %</text>
<text x="201.9" y="315.71999999999997" font-size="9.6" fill="#222" text-anchor="end" transform="translate(201.9 0) scale(0.826 1) translate(-201.9 0)">80 %</text>
<text x="201.9" y="336.03999999999996" font-size="9.6" fill="#222" text-anchor="end" transform="translate(201.9 0) scale(0.826 1) translate(-201.9 0)">60 %</text>
<text x="201.9" y="356.35999999999996" font-size="9.6" fill="#222" text-anchor="end" transform="translate(201.9 0) scale(0.826 1) translate(-201.9 0)">40 %</text>
<text x="201.9" y="376.68" font-size="9.6" fill="#222" text-anchor="end" transform="translate(201.9 0) scale(0.826 1) translate(-201.9 0)">20 %</text>
<text x="201.9" y="396.99999999999994" font-size="9.6" fill="#222" text-anchor="end" transform="translate(201.9 0) scale(0.826 1) translate(-201.9 0)">0 %</text>
<text x="286.4" y="407.90000000000003" font-size="9.6" fill="#222" text-anchor="middle" transform="translate(286.4 0) scale(0.944 1) translate(-286.4 0)">7:35:33pm</text>
<text x="425.29999999999995" y="407.90000000000003" font-size="9.6" fill="#222" text-anchor="middle" transform="translate(425.29999999999995 0) scale(0.944 1) translate(-425.29999999999995 0)">7:35:40pm</text>
<text x="564.2" y="407.90000000000003" font-size="9.6" fill="#222" text-anchor="middle" transform="translate(564.2 0) scale(0.944 1) translate(-564.2 0)">7:35:47pm</text>
<text x="703.1" y="407.90000000000003" font-size="9.6" fill="#222" text-anchor="middle" transform="translate(703.1 0) scale(0.944 1) translate(-703.1 0)">7:35:54pm</text>
<text x="842.0" y="407.90000000000003" font-size="9.6" fill="#222" text-anchor="middle" transform="translate(842.0 0) scale(0.944 1) translate(-842.0 0)">7:36:01pm</text>
<text x="980.9" y="407.90000000000003" font-size="9.6" fill="#222" text-anchor="middle" transform="translate(980.9 0) scale(0.944 1) translate(-980.9 0)">7:36:08pm</text>
<text x="1119.8000000000002" y="407.90000000000003" font-size="9.6" fill="#222" text-anchor="middle" transform="translate(1119.8000000000002 0) scale(0.944 1) translate(-1119.8000000000002 0)">7:36:15pm</text>
<text x="1258.7" y="407.90000000000003" font-size="9.6" fill="#222" text-anchor="middle" transform="translate(1258.7 0) scale(0.944 1) translate(-1258.7 0)">7:36:22pm</text>
<text x="1397.6" y="407.90000000000003" font-size="9.6" fill="#222" text-anchor="middle" transform="translate(1397.6 0) scale(0.944 1) translate(-1397.6 0)">7:36:29pm</text>
</svg></div>
<div class="a" style="left:1402px;top:283px;width:191px;height:132px;background:#2d2f32;"></div>
<div class="a" style="left:1404px;top:286.4px;width:10px;height:10px;border-radius:2.2px;background:linear-gradient(#3a82f0,#2060dc)"></div><svg style="left:1404px;top:286.4px" width="10" height="10" viewBox="0 0 10 10"><path d="M2.3 5.2 L4.2 7.3 L7.7 2.6" stroke="#fff" stroke-width="1.4" fill="none" stroke-linecap="round" stroke-linejoin="round"/></svg>
<div class="a" style="left:1418.2px;top:284.4px;width:13.5px;height:13.5px;background:#c6c6ff;border:1px solid #d8d8d8;border-radius:1.5px;box-shadow:inset 0 0 0 1px #2a2a2a"></div>
<div class="t" style="left:1433.3px;top:285.09999999999997px;transform-origin:0 50%;transform:scaleX(1.0);color:#c8c8c8;font-size:9.6px;-webkit-text-stroke:0.28px;">JVM CPU Usage</div>
<div class="a" style="left:1404px;top:300.7px;width:10px;height:10px;border-radius:2.2px;background:linear-gradient(#3a82f0,#2060dc)"></div><svg style="left:1404px;top:300.7px" width="10" height="10" viewBox="0 0 10 10"><path d="M2.3 5.2 L4.2 7.3 L7.7 2.6" stroke="#fff" stroke-width="1.4" fill="none" stroke-linecap="round" stroke-linejoin="round"/></svg>
<div class="a" style="left:1418.2px;top:298.7px;width:13.5px;height:13.5px;background:#0a0a96;border:1px solid #d8d8d8;border-radius:1.5px;box-shadow:inset 0 0 0 1px #2a2a2a"></div>
<div class="t" style="left:1433.3px;top:299.4px;transform-origin:0 50%;transform:scaleX(1.0);color:#c8c8c8;font-size:9.6px;-webkit-text-stroke:0.28px;">Machine CPU Usage</div>
<div class="a" style="left:167px;top:423.4px;width:1433px;height:20.8px;background:#3a3d40;border-radius:3px 0 0 3px"></div>
<div class="a" style="left:167px;top:442.8px;width:1433px;height:1.4px;background:#252729;"></div>
<div class="a" style="left:168.7px;top:425.2px;width:1431.3px;height:17.6px;background:linear-gradient(#505458,#585c5f);border-radius:2px 0 0 2px"></div>
<div class="a" style="left:172.2px;top:428.8px;width:8.6px;height:9.8px;background:#494d50;"></div>
<svg style="left:172.9px;top:432.0px" width="7" height="3.8" viewBox="0 0 7 3.8"><path d="M0 0 H7 L3.5 3.8 Z" fill="#f6f6f6"/></svg>
<div class="t" style="left:186.1px;top:426.7px;transform-origin:0 50%;transform:scaleX(1.06);color:#d2d2d2;font-size:9.2px;font-weight:bold;">Memory</div>
<div class="a" style="left:167px;top:444.5px;width:4.8px;height:140.5px;background:#313131;"></div><div class="a" style="left:1596.2px;top:444.5px;width:3.8px;height:140.5px;background:#313131;"></div>
<div class="a" style="left:1550px;top:425.6px;width:29.5px;height:14.7px;background:#4d5154;"></div>
<svg style="left:1552.0px;top:427.90000000000003px" width="10.4" height="10.4" viewBox="0 0 10.4 10.4"><defs><radialGradient id="plg" cx="50%" cy="45%" r="55%"><stop offset="0" stop-color="#d2e44c"/><stop offset="0.6" stop-color="#a4d450"/><stop offset="1" stop-color="#54b860"/></radialGradient></defs><path d="M3.5 0.5 H6.9 V3.5 H9.9 V6.9 H6.9 V9.9 H3.5 V6.9 H0.5 V3.5 H3.5 Z" fill="url(#plg)" stroke="#2f9060" stroke-width="0.9" stroke-linejoin="round"/></svg>
<svg style="left:1566.0500000000002px;top:425.70000000000005px" width="13" height="14" viewBox="0 0 13 14"><defs><linearGradient id="rfg" x1="0" y1="0" x2="1" y2="1"><stop offset="0" stop-color="#ffe9a8"/><stop offset="0.5" stop-color="#f8b828"/><stop offset="1" stop-color="#c87c08"/></linearGradient></defs><path d="M4.5 4.0 L8.1 0.3 L7.9 2.6 C10.8 2.6 12.9 5 11.6 8.4 C11 6.6 10 5.7 8.0 5.4 L8.4 7.4 Z" fill="url(#rfg)" stroke="#b07408" stroke-width="0.45" stroke-linejoin="round"/><path d="M4.5 4.0 L8.1 0.3 L7.9 2.6 C10.8 2.6 12.9 5 11.6 8.4 C11 6.6 10 5.7 8.0 5.4 L8.4 7.4 Z" fill="url(#rfg)" stroke="#b07408" stroke-width="0.45" stroke-linejoin="round" transform="rotate(180 6.35 6.55)"/><path d="M5.6 3.9 L7.6 2 L7.6 3.4 C9.6 3.4 10.8 4.4 11 5.8" stroke="#fff6d8" stroke-width="0.8" fill="none" opacity="0.8"/><path d="M5.6 3.9 L7.6 2 L7.6 3.4 C9.6 3.4 10.8 4.4 11 5.8" stroke="#fff6d8" stroke-width="0.8" fill="none" opacity="0.8" transform="rotate(180 6.35 6.55)"/></svg>
<div class="a" style="left:1580.7px;top:426.2px;width:13.6px;height:14px;background:#f3f3f3;border:1px solid #fdfdfd"></div><svg style="left:1582.7px;top:428.2px" width="10" height="10" viewBox="0 0 10 10"><circle cx="3.6" cy="1.2" r="0.9" fill="#c4c4c4"/><path d="M3.6 2.5 V5.8 H6.5 L7.8 8.6 H9" stroke="#c4c4c4" stroke-width="0.9" fill="none"/><path d="M2.5 4.2 A2.8 2.8 0 1 0 6.6 7.5" stroke="#c4c4c4" stroke-width="0.9" fill="none"/></svg>
<div class="a" style="left:176px;top:450px;width:1222px;height:131px;background:#fff;overflow:hidden">
<svg style="left:0;top:0" width="1222" height="131" viewBox="176 450 1222 131">
<line x1="211.7" y1="460.8" x2="1398" y2="460.8" stroke="#8e8e8e" stroke-width="0.9" stroke-dasharray="4.1 2.3"/>
<line x1="208.2" y1="460.8" x2="211.7" y2="460.8" stroke="#444" stroke-width="1"/>
<line x1="211.7" y1="471.82" x2="1398" y2="471.82" stroke="#8e8e8e" stroke-width="0.9" stroke-dasharray="4.1 2.3"/>
<line x1="208.2" y1="471.82" x2="211.7" y2="471.82" stroke="#444" stroke-width="1"/>
<line x1="211.7" y1="482.84000000000003" x2="1398" y2="482.84000000000003" stroke="#8e8e8e" stroke-width="0.9" stroke-dasharray="4.1 2.3"/>
<line x1="208.2" y1="482.84000000000003" x2="211.7" y2="482.84000000000003" stroke="#444" stroke-width="1"/>
<line x1="211.7" y1="493.86" x2="1398" y2="493.86" stroke="#8e8e8e" stroke-width="0.9" stroke-dasharray="4.1 2.3"/>
<line x1="208.2" y1="493.86" x2="211.7" y2="493.86" stroke="#444" stroke-width="1"/>
<line x1="211.7" y1="504.88" x2="1398" y2="504.88" stroke="#8e8e8e" stroke-width="0.9" stroke-dasharray="4.1 2.3"/>
<line x1="208.2" y1="504.88" x2="211.7" y2="504.88" stroke="#444" stroke-width="1"/>
<line x1="211.7" y1="515.9" x2="1398" y2="515.9" stroke="#8e8e8e" stroke-width="0.9" stroke-dasharray="4.1 2.3"/>
<line x1="208.2" y1="515.9" x2="211.7" y2="515.9" stroke="#444" stroke-width="1"/>
<line x1="211.7" y1="526.9200000000001" x2="1398" y2="526.9200000000001" stroke="#8e8e8e" stroke-width="0.9" stroke-dasharray="4.1 2.3"/>
<line x1="208.2" y1="526.9200000000001" x2="211.7" y2="526.9200000000001" stroke="#444" stroke-width="1"/>
<line x1="211.7" y1="537.94" x2="1398" y2="537.94" stroke="#8e8e8e" stroke-width="0.9" stroke-dasharray="4.1 2.3"/>
<line x1="208.2" y1="537.94" x2="211.7" y2="537.94" stroke="#444" stroke-width="1"/>
<line x1="211.7" y1="548.96" x2="1398" y2="548.96" stroke="#8e8e8e" stroke-width="0.9" stroke-dasharray="4.1 2.3"/>
<line x1="208.2" y1="548.96" x2="211.7" y2="548.96" stroke="#444" stroke-width="1"/>
<line x1="208.2" y1="559.98" x2="211.7" y2="559.98" stroke="#444" stroke-width="1"/>
<line x1="211.7" y1="458.8" x2="211.7" y2="560.5" stroke="#3c3c3c" stroke-width="0.9"/>
<line x1="211.7" y1="560" x2="1398" y2="560" stroke="#7c7c7c" stroke-width="1.1"/>
<line x1="289.6" y1="558.2" x2="289.6" y2="561.2" stroke="#222" stroke-width="0.9"/>
<line x1="428.1" y1="558.2" x2="428.1" y2="561.2" stroke="#222" stroke-width="0.9"/>
<line x1="566.6" y1="558.2" x2="566.6" y2="561.2" stroke="#222" stroke-width="0.9"/>
<line x1="705.1" y1="558.2" x2="705.1" y2="561.2" stroke="#222" stroke-width="0.9"/>
<line x1="843.6" y1="558.2" x2="843.6" y2="561.2" stroke="#222" stroke-width="0.9"/>
<line x1="982.1" y1="558.2" x2="982.1" y2="561.2" stroke="#222" stroke-width="0.9"/>
<line x1="1120.6" y1="558.2" x2="1120.6" y2="561.2" stroke="#222" stroke-width="0.9"/>
<line x1="1259.1" y1="558.2" x2="1259.1" y2="561.2" stroke="#222" stroke-width="0.9"/>
<line x1="1397.6" y1="558.2" x2="1397.6" y2="561.2" stroke="#222" stroke-width="0.9"/>
<path d="M804.1 503.5 L824.1 486.1 L943.0 486.1 L962.5 481.5 L1179.8 481.5 L1200.3 474.8 L1398.0 474.8" stroke="#b03a3a" stroke-width="1.0" fill="none" stroke-linejoin="round"/>
<text x="206.29999999999998" y="464.0" font-size="9.6" fill="#222" text-anchor="end" transform="translate(206.29999999999998 0) scale(0.891 1) translate(-206.29999999999998 0)">72 MiB</text>
<text x="206.29999999999998" y="475.02" font-size="9.6" fill="#222" text-anchor="end" transform="translate(206.29999999999998 0) scale(0.891 1) translate(-206.29999999999998 0)">64 MiB</text>
<text x="206.29999999999998" y="486.04" font-size="9.6" fill="#222" text-anchor="end" transform="translate(206.29999999999998 0) scale(0.891 1) translate(-206.29999999999998 0)">56 MiB</text>
<text x="206.29999999999998" y="497.06" font-size="9.6" fill="#222" text-anchor="end" transform="translate(206.29999999999998 0) scale(0.891 1) translate(-206.29999999999998 0)">48 MiB</text>
<text x="206.29999999999998" y="508.08" font-size="9.6" fill="#222" text-anchor="end" transform="translate(206.29999999999998 0) scale(0.891 1) translate(-206.29999999999998 0)">40 MiB</text>
<text x="206.29999999999998" y="519.1" font-size="9.6" fill="#222" text-anchor="end" transform="translate(206.29999999999998 0) scale(0.891 1) translate(-206.29999999999998 0)">32 MiB</text>
<text x="206.29999999999998" y="530.1200000000001" font-size="9.6" fill="#222" text-anchor="end" transform="translate(206.29999999999998 0) scale(0.891 1) translate(-206.29999999999998 0)">24 MiB</text>
<text x="206.29999999999998" y="541.1400000000001" font-size="9.6" fill="#222" text-anchor="end" transform="translate(206.29999999999998 0) scale(0.891 1) translate(-206.29999999999998 0)">16 MiB</text>
<text x="206.29999999999998" y="552.1600000000001" font-size="9.6" fill="#222" text-anchor="end" transform="translate(206.29999999999998 0) scale(0.891 1) translate(-206.29999999999998 0)">8 MiB</text>
<text x="206.29999999999998" y="563.1800000000001" font-size="9.6" fill="#222" text-anchor="end" transform="translate(206.29999999999998 0) scale(0.891 1) translate(-206.29999999999998 0)">0 B</text>
<text x="289.6" y="574.0999999999999" font-size="9.6" fill="#222" text-anchor="middle" transform="translate(289.6 0) scale(0.944 1) translate(-289.6 0)">7:35:33pm</text>
<text x="428.1" y="574.0999999999999" font-size="9.6" fill="#222" text-anchor="middle" transform="translate(428.1 0) scale(0.944 1) translate(-428.1 0)">7:35:40pm</text>
<text x="566.6" y="574.0999999999999" font-size="9.6" fill="#222" text-anchor="middle" transform="translate(566.6 0) scale(0.944 1) translate(-566.6 0)">7:35:47pm</text>
<text x="705.1" y="574.0999999999999" font-size="9.6" fill="#222" text-anchor="middle" transform="translate(705.1 0) scale(0.944 1) translate(-705.1 0)">7:35:54pm</text>
<text x="843.6" y="574.0999999999999" font-size="9.6" fill="#222" text-anchor="middle" transform="translate(843.6 0) scale(0.944 1) translate(-843.6 0)">7:36:01pm</text>
<text x="982.1" y="574.0999999999999" font-size="9.6" fill="#222" text-anchor="middle" transform="translate(982.1 0) scale(0.944 1) translate(-982.1 0)">7:36:08pm</text>
<text x="1120.6" y="574.0999999999999" font-size="9.6" fill="#222" text-anchor="middle" transform="translate(1120.6 0) scale(0.944 1) translate(-1120.6 0)">7:36:15pm</text>
<text x="1259.1" y="574.0999999999999" font-size="9.6" fill="#222" text-anchor="middle" transform="translate(1259.1 0) scale(0.944 1) translate(-1259.1 0)">7:36:22pm</text>
<text x="1397.6" y="574.0999999999999" font-size="9.6" fill="#222" text-anchor="middle" transform="translate(1397.6 0) scale(0.944 1) translate(-1397.6 0)">7:36:29pm</text>
</svg></div>
<div class="a" style="left:1402px;top:449px;width:191px;height:132px;background:#2d2f32;"></div>
<div class="a" style="left:1404px;top:452.4px;width:10px;height:10px;border-radius:2.2px;background:linear-gradient(#5c5f61,#535557);border:0.5px solid #606365"></div>
<div class="a" style="left:1418.2px;top:450.4px;width:13.5px;height:13.5px;background:#c06868;border:1px solid #d8d8d8;border-radius:1.5px;box-shadow:inset 0 0 0 1px #2a2a2a"></div>
<div class="t" style="left:1433.3px;top:451.09999999999997px;transform-origin:0 50%;transform:scaleX(1.0156);color:#c8c8c8;font-size:9.6px;-webkit-text-stroke:0.28px;">Committed Java Heap</div>
<div class="a" style="left:1404px;top:466.7px;width:10px;height:10px;border-radius:2.2px;background:linear-gradient(#5c5f61,#535557);border:0.5px solid #606365"></div>
<div class="a" style="left:1418.2px;top:464.7px;width:13.5px;height:13.5px;background:#6a90c8;border:1px solid #d8d8d8;border-radius:1.5px;box-shadow:inset 0 0 0 1px #2a2a2a"></div>
<div class="t" style="left:1433.3px;top:465.4px;transform-origin:0 50%;transform:scaleX(1.0104);color:#c8c8c8;font-size:9.6px;-webkit-text-stroke:0.28px;">Maximum Java Heap</div>
<div class="a" style="left:1404px;top:481.0px;width:10px;height:10px;border-radius:2.2px;background:linear-gradient(#5c5f61,#535557);border:0.5px solid #606365"></div>
<div class="a" style="left:1418.2px;top:479.0px;width:13.5px;height:13.5px;background:#3aa870;border:1px solid #d8d8d8;border-radius:1.5px;box-shadow:inset 0 0 0 1px #2a2a2a"></div>
<div class="t" style="left:1433.3px;top:479.7px;transform-origin:0 50%;transform:scaleX(1.0333);color:#c8c8c8;font-size:9.6px;-webkit-text-stroke:0.28px;">Total Physical Memory (deprecated)</div>
<div class="a" style="left:1404px;top:495.3px;width:10px;height:10px;border-radius:2.2px;background:linear-gradient(#3a82f0,#2060dc)"></div><svg style="left:1404px;top:495.3px" width="10" height="10" viewBox="0 0 10 10"><path d="M2.3 5.2 L4.2 7.3 L7.7 2.6" stroke="#fff" stroke-width="1.4" fill="none" stroke-linecap="round" stroke-linejoin="round"/></svg>
<div class="a" style="left:1418.2px;top:493.3px;width:13.5px;height:13.5px;background:#960a0a;border:1px solid #d8d8d8;border-radius:1.5px;box-shadow:inset 0 0 0 1px #2a2a2a"></div>
<div class="t" style="left:1433.3px;top:494.0px;transform-origin:0 50%;transform:scaleX(1.0125);color:#c8c8c8;font-size:9.6px;-webkit-text-stroke:0.28px;">Used Java Heap Memory</div>
<div class="a" style="left:1404px;top:509.59999999999997px;width:10px;height:10px;border-radius:2.2px;background:linear-gradient(#5c5f61,#535557);border:0.5px solid #606365"></div>
<div class="a" style="left:1418.2px;top:507.59999999999997px;width:13.5px;height:13.5px;background:#f08418;border:1px solid #d8d8d8;border-radius:1.5px;box-shadow:inset 0 0 0 1px #2a2a2a"></div>
<div class="t" style="left:1433.3px;top:508.29999999999995px;transform-origin:0 50%;transform:scaleX(1.0156);color:#c8c8c8;font-size:9.6px;-webkit-text-stroke:0.28px;">Used Physical Memory</div>
<div class="a" style="left:1405.5px;top:570.5px;width:181px;height:6.5px;background:#9a9a9a;border-radius:3.5px"></div>
<div class="a" style="left:162px;top:586px;width:1438px;height:3px;background:#26282a;"></div>
<div class="a" style="left:162px;top:589px;width:1438px;height:22px;background:linear-gradient(#3f4043,#434548);"></div>
<div class="a" style="left:162px;top:611px;width:1438px;height:3.6px;background:#4e5557;"></div>
<div class="a" style="left:162.8px;top:589px;width:65.2px;height:20.4px;background:#2b2b2b;border-top:1.7px solid #3577b8"></div>
<svg style="left:168px;top:593.5px" width="11" height="11" viewBox="0 0 11 11"><rect x="0.5" y="0.5" width="10" height="10" fill="#e8eef8" stroke="#5a8ad0" stroke-width="1"/><rect x="0.5" y="0.5" width="10" height="2.4" fill="#5a8ad0"/><rect x="2" y="4.6" width="2.6" height="4" fill="none" stroke="#3f6fc0" stroke-width="0.9"/><rect x="6" y="4.4" width="3" height="1.3" fill="#3f6fc0"/><rect x="6" y="7.2" width="3" height="1.3" fill="#3f6fc0"/></svg>
<div class="t" style="left:183px;top:592.1px;transform-origin:0 50%;transform:scaleX(0.9994);color:#f4f4f4;font-size:9.85px;-webkit-text-stroke:0.28px;">Overview</div>
<svg style="left:233px;top:593px" width="12" height="12" viewBox="0 0 12 12"><path d="M0.5 1 H8 M1 1 V10 M1 4 H3.5 M1 7 H3.5" stroke="#6aa0e8" stroke-width="1" fill="none" stroke-dasharray="1 1"/><rect x="3" y="0.2" width="7" height="2" fill="#a8b8d0"/><ellipse cx="7.6" cy="7.6" rx="4" ry="3" transform="rotate(35 7.6 7.6)" fill="#c07838"/><ellipse cx="7.2" cy="7" rx="2" ry="1.2" transform="rotate(35 7.2 7)" fill="#e8b078"/></svg>
<div class="t" style="left:248.5px;top:592.1px;transform-origin:0 50%;transform:scaleX(0.9715);color:#9a9a9a;font-size:9.85px;-webkit-text-stroke:0.28px;">MBean Browser</div>
<svg style="left:326px;top:593px" width="12" height="12" viewBox="0 0 12 12"><path d="M6 0.5 L11.5 6 L6 11.5 L0.5 6 Z" fill="#f6b830" stroke="#c88a18" stroke-width="0.7"/><rect x="5.3" y="2.8" width="1.4" height="4" fill="#fff8e0"/><rect x="5.3" y="7.8" width="1.4" height="1.4" fill="#fff8e0"/></svg>
<div class="t" style="left:341.5px;top:592.1px;transform-origin:0 50%;transform:scaleX(0.9994);color:#9a9a9a;font-size:9.85px;-webkit-text-stroke:0.28px;">Triggers</div>
<svg style="left:386px;top:592px" width="13" height="13" viewBox="0 0 13 13"><rect x="6.2" y="1" width="5" height="5" transform="rotate(45 8.7 3.5)" fill="#e8a838" stroke="#a87018" stroke-width="0.7"/><rect x="1.6" y="6.4" width="5" height="5" transform="rotate(45 4.1 8.9)" fill="#e8a838" stroke="#a87018" stroke-width="0.7"/><circle cx="8.7" cy="3.5" r="1.1" fill="#4a4e51"/><circle cx="4.1" cy="8.9" r="1.1" fill="#4a4e51"/><path d="M2 1.5 L5 1 L4 4 Z M11 11.5 L8 12 L9 9 Z" fill="#3d8fe6"/></svg>
<div class="t" style="left:403px;top:592.1px;transform-origin:0 50%;transform:scaleX(0.9994);color:#9a9a9a;font-size:9.85px;-webkit-text-stroke:0.28px;">System</div>
<svg style="left:443px;top:591px" width="14" height="14" viewBox="0 0 14 14"><rect x="5" y="0.5" width="8.5" height="7" fill="#f4f4f4"/><path d="M6 3 L8 5 L10 2.5 L12.5 4" stroke="#d83030" stroke-width="0.8" fill="none"/><path d="M0.8 6.5 L3.6 3.8 L12 11 L9.2 13.5 Z" fill="#58b838" stroke="#2f7a20" stroke-width="0.7"/><path d="M3 6.5 L4.5 5.2 M5 8.2 L6.5 6.9 M7 10 L8.5 8.7" stroke="#d0f0b0" stroke-width="0.7"/></svg>
<div class="t" style="left:460px;top:592.1px;transform-origin:0 50%;transform:scaleX(0.9994);color:#9a9a9a;font-size:9.85px;-webkit-text-stroke:0.28px;">Memory</div>
<svg style="left:504px;top:592px" width="13" height="13" viewBox="0 0 13 13"><path d="M1 6 L6 9 L1 12.5 Z" fill="#38b848" stroke="#1f8030" stroke-width="0.6"/><rect x="6.5" y="1.2" width="5" height="5" transform="rotate(45 9 3.7)" fill="#e8a838" stroke="#a87018" stroke-width="0.7"/><circle cx="9" cy="3.7" r="1.1" fill="#4a4e51"/></svg>
<div class="t" style="left:520.5px;top:592.1px;transform-origin:0 50%;transform:scaleX(0.9994);color:#9a9a9a;font-size:9.85px;-webkit-text-stroke:0.28px;">Threads</div>
<svg style="left:564px;top:592px" width="13" height="13" viewBox="0 0 13 13"><rect x="0.5" y="1" width="9" height="7" fill="#e8ecf4" stroke="#8aa0c8" stroke-width="0.8"/><rect x="0.5" y="1" width="9" height="1.8" fill="#5a8ad0"/><rect x="3" y="5" width="9.5" height="4.5" fill="#f0b840" stroke="#a87818" stroke-width="0.7"/><rect x="4.5" y="9.5" width="6.5" height="2.5" fill="#c8ccd4"/></svg>
<div class="t" style="left:580.5px;top:592.1px;transform-origin:0 50%;transform:scaleX(0.9994);color:#9a9a9a;font-size:9.85px;-webkit-text-stroke:0.28px;">Diagnostic Commands</div>
<div class="a" style="left:162px;top:614.5px;width:1438px;height:22.7px;background:linear-gradient(#4a4b4f,#414246);"></div>
<div class="a" style="left:162.4px;top:615px;width:75.4px;height:21.5px;background:#2b2b2b;"></div>
<div class="a" style="left:167px;top:621px;width:10.5px;height:1.8px;background:#5fa8f4;"></div>
<div class="a" style="left:167px;top:625px;width:10.5px;height:1.8px;background:#5fa8f4;"></div>
<div class="a" style="left:167px;top:629px;width:10.5px;height:1.8px;background:#5fa8f4;"></div>
<div class="t" style="left:182px;top:618.6px;transform-origin:0 50%;transform:scaleX(0.9994);color:#f4f4f4;font-size:9.85px;-webkit-text-stroke:0.28px;">Stack Trace</div>
<svg style="left:242px;top:619px" width="13" height="14" viewBox="0 0 13 14"><path d="M5.8 0.5 C6.5 3 8.8 4 9.6 6.2 C10 5.4 10 4.6 9.8 4 C12 6 12.6 9.4 10.6 11.6 C9 13.4 4.6 13.6 2.6 11.6 C0.6 9.6 1 6.8 2.6 5 C2.8 6 3.2 6.6 3.8 7 C3.6 4.6 4.6 2.4 5.8 0.5 Z" fill="#e8541c"/><path d="M6.4 5.5 C7 7 8.6 7.8 8.8 9.6 C9 11.4 7.6 12.4 6.4 12.4 C5 12.4 3.8 11.4 4 9.8 C4.2 8.6 5.4 8 5.6 7 C6 6.6 6.2 6 6.4 5.5 Z" fill="#f8c830"/><path d="M2 10.5 C3 13.6 10 13.6 11 10.5 C10 12 3 12 2 10.5 Z" fill="#3d8fe6"/></svg>
<div class="t" style="left:258.5px;top:618.6px;transform-origin:0 50%;transform:scaleX(0.9715);color:#a0a0a0;font-size:9.85px;-webkit-text-stroke:0.28px;">Flame Graph</div>
<div class="a" style="left:1351.6px;top:616px;width:215.6px;height:18px;background:#4b5054;"></div>
<svg style="left:1356.5px;top:619.3px" width="12" height="12" viewBox="0 0 12 12"><path d="M1.6 0.4 V11.6" stroke="#6f7376" stroke-width="2.6" fill="none"/><path d="M2.4 6.4 C5.2 5.6 7.6 7.4 7.8 11.6" stroke="#6f7376" stroke-width="2.3" fill="none"/><path d="M7.2 0.6 V5.4 M4.8 3 H9.6" stroke="#6f7376" stroke-width="1.3"/></svg>
<svg style="left:1372.6px;top:619.3px" width="12" height="12" viewBox="0 0 12 12"><path d="M9.6 0.4 V11.6" stroke="#6f7376" stroke-width="2.6" fill="none"/><path d="M8.8 6.4 C6 5.6 3.6 7.4 3.4 11.6" stroke="#6f7376" stroke-width="2.3" fill="none"/><path d="M2.2 2.6 H6.8" stroke="#6f7376" stroke-width="1.5"/><path d="M0.4 2.6 L3 0.4 V4.8 Z" fill="#6f7376"/></svg>
<svg style="left:1394px;top:619.3px" width="12" height="12" viewBox="0 0 12 12"><path d="M1.6 0.4 V11.6" stroke="#6f7376" stroke-width="2.6" fill="none"/><path d="M2.4 6.4 C5.2 5.6 7.6 7.4 7.8 11.6" stroke="#6f7376" stroke-width="2.3" fill="none"/><path d="M4.6 2.6 H9.2" stroke="#6f7376" stroke-width="1.5"/><path d="M11 2.6 L8.4 0.4 V4.8 Z" fill="#6f7376"/></svg>
<svg style="left:1416px;top:620px" width="12" height="11" viewBox="0 0 12 11"><path d="M1.6 2.6 V8.8 H4 M1.6 5.4 H4" stroke="#6a6e72" stroke-width="0.6" fill="none"/><rect x="0.5" y="0.6" width="2.3" height="2.3" fill="#6a9cf0"/><rect x="3.6" y="4.2" width="2.3" height="2.3" fill="#6a9cf0"/><rect x="3.6" y="7.6" width="2.3" height="2.3" fill="#6a9cf0"/><rect x="3.8" y="1.3" width="6.4" height="0.9" fill="#7c8084"/><rect x="7" y="4.9" width="3.2" height="0.9" fill="#7c8084"/><rect x="7" y="8.3" width="3.2" height="0.9" fill="#7c8084"/></svg>
<svg style="left:1437.2px;top:618px" width="14.4" height="14.4" viewBox="0 0 16 16"><path d="M5 1.8 C9 -0.5 13.5 2 14.8 6.5" stroke="#111" stroke-width="1.2" fill="none"/><path d="M13.2 6 L15.6 8 L15.8 5.2 Z" fill="#111"/><circle cx="7" cy="9" r="5.6" fill="#f4f8ff" stroke="#7fb0f0" stroke-width="1.1" stroke-dasharray="1.3 0.9"/><path d="M7 9 L7 4.1 A4.9 4.9 0 0 1 11.9 9 Z" fill="#f06c6c"/><path d="M7 5 V9 H10.4" stroke="#111" stroke-width="1.4" fill="none"/></svg>
<div class="a" style="left:1454px;top:616px;width:18.5px;height:18px;background:transparent;border:1px solid #5f6366"></div>
<svg style="left:1458px;top:620px" width="10" height="10" viewBox="0 0 10 10"><circle cx="5" cy="5" r="4.8" fill="#0f7a12"/><circle cx="5" cy="4.2" r="3.4" fill="#22a022" opacity="0.75"/><text x="5" y="7.3" font-size="6.2" font-weight="bold" fill="#e8ffe8" text-anchor="middle" font-family="Liberation Sans">M</text></svg>
<svg style="left:1475px;top:619px" width="13" height="13" viewBox="0 0 13 13"><path d="M0.8 5.8 L6 8.6 L2.2 12.2 Z" fill="#3cb868" stroke="#2a9a50" stroke-width="0.5"/><circle cx="8.8" cy="4.9" r="2.5" fill="none" stroke="#e8ac2c" stroke-width="1.8"/><circle cx="8.8" cy="4.9" r="3.5" fill="none" stroke="#a8681a" stroke-width="0.9" stroke-dasharray="1.3 1.45"/><circle cx="8.8" cy="4.9" r="1.3" fill="#7a78b0"/></svg>
<div class="t" style="left:1499.5px;top:618.5px;transform-origin:0 50%;transform:scaleX(0.9994);color:#ececec;font-size:9.85px;-webkit-text-stroke:0.28px;">Samples</div>
<svg style="left:1541.5px;top:623.5px" width="5" height="4" viewBox="0 0 5 4"><path d="M0 0 H5 L2.5 3.6 Z" fill="#e8e8e8"/></svg>
<div class="a" style="left:1556.9px;top:619.3px;width:2.6px;height:2.6px;border-radius:50%;background:#f0f0f0"></div>
<div class="a" style="left:1556.9px;top:623.6999999999999px;width:2.6px;height:2.6px;border-radius:50%;background:#f0f0f0"></div>
<div class="a" style="left:1556.9px;top:628.0999999999999px;width:2.6px;height:2.6px;border-radius:50%;background:#f0f0f0"></div>
<div class="a" style="left:1572px;top:621px;width:9px;height:3px;border:1px solid #d8d8d8;border-radius:1px"></div>
<div class="a" style="left:1591px;top:621px;width:9px;height:9px;border:1px solid #d8d8d8;border-top-width:1px"></div><div class="a" style="left:1591px;top:623.5px;width:9px;height:1px;background:#d8d8d8"></div>
<div class="a" style="left:162.4px;top:637.2px;width:1438px;height:23.1px;background:#5a5e60;"></div>
<div class="t" style="left:164.2px;top:641.6px;transform-origin:0 50%;transform:scaleX(0.9994);color:#e4e4e4;font-size:9.85px;-webkit-text-stroke:0.28px;">Stack Trace</div>
<div class="t" style="left:373px;top:641.6px;width:400px;text-align:right;transform-origin:100% 50%;transform:scaleX(0.9994);color:#e4e4e4;font-size:9.85px;-webkit-text-stroke:0.28px;">Samples</div>
<div class="t" style="left:473.5px;top:641.6px;width:400px;text-align:right;transform-origin:100% 50%;transform:scaleX(0.9994);color:#e4e4e4;font-size:9.85px;-webkit-text-stroke:0.28px;">Percentage</div>
<div class="a" style="left:707px;top:643px;width:1px;height:16px;background:#8e9193;"></div>
<div class="a" style="left:774px;top:643px;width:1px;height:16px;background:#8e9193;"></div>
<div class="a" style="left:875px;top:643px;width:1px;height:16px;background:#8e9193;"></div>
<div class="a" style="left:162.4px;top:660.3px;width:1438px;height:149.3px;background:repeating-linear-gradient(#212121 0,#212121 12.6px,#2c2c2c 12.6px,#2c2c2c 25.2px);"></div>
<div class="a" style="left:707px;top:660px;width:1px;height:149px;background:#3c3c3c;"></div>
<div class="a" style="left:774px;top:660px;width:1px;height:149px;background:#3c3c3c;"></div>
<div class="a" style="left:875px;top:660px;width:1px;height:149px;background:#3c3c3c;"></div>
</div></body></html>
